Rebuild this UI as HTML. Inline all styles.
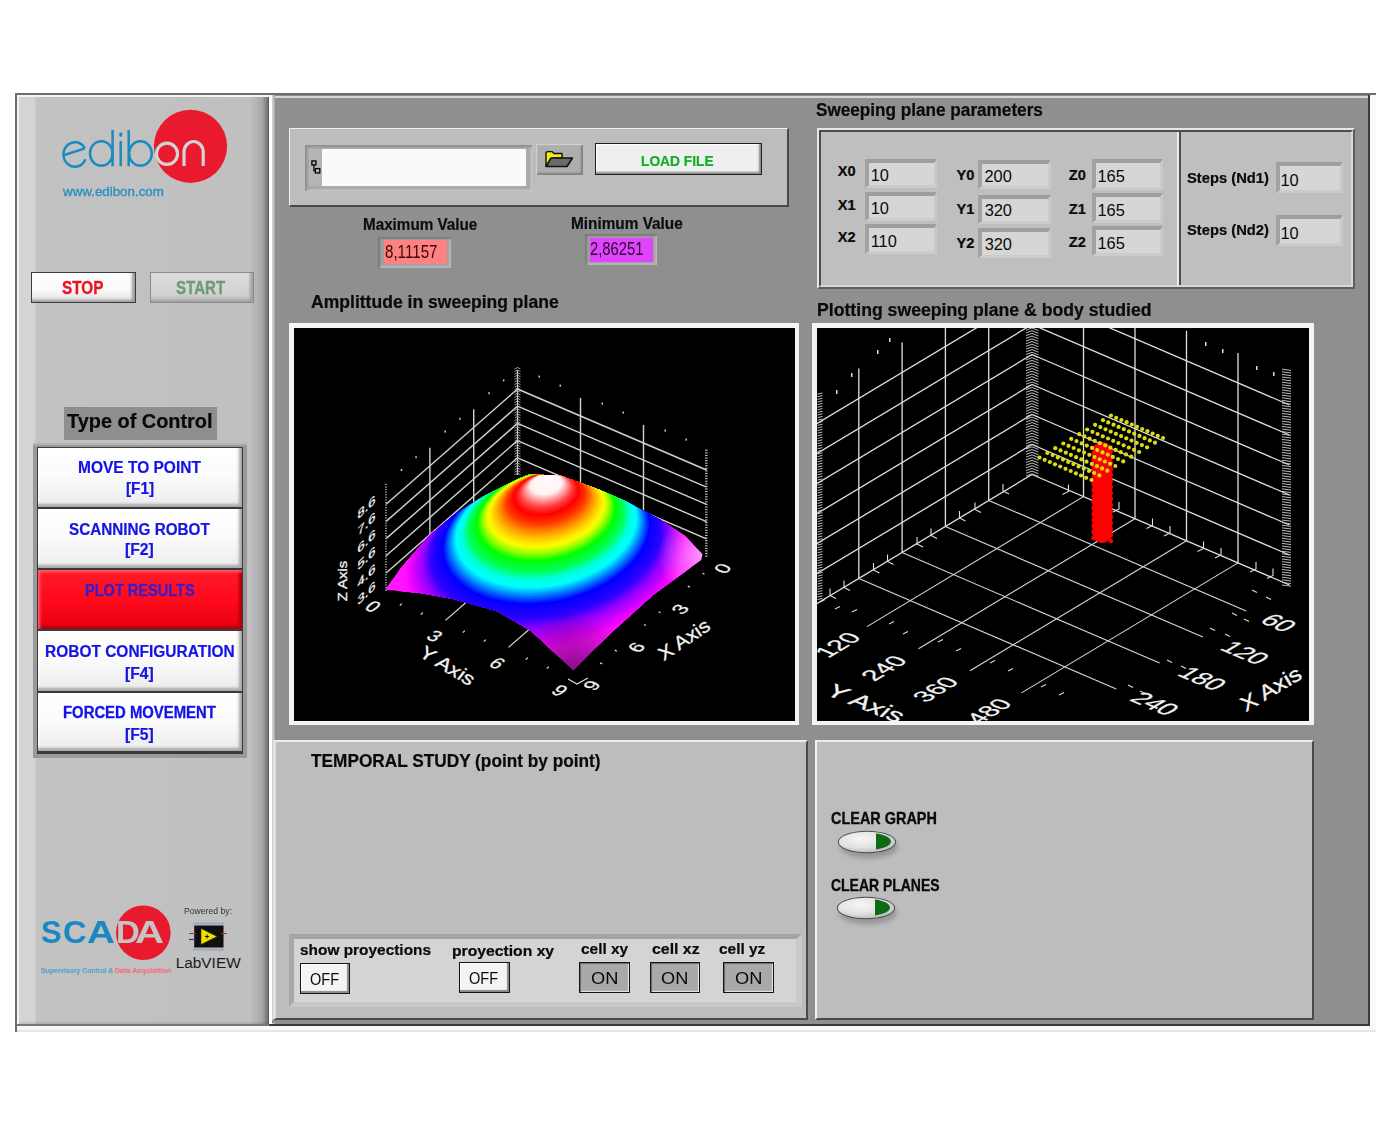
<!DOCTYPE html><html><head><meta charset="utf-8"><style>
html,body{margin:0;padding:0;}
body{width:1393px;height:1125px;position:relative;overflow:hidden;background:#fff;font-family:"Liberation Sans",sans-serif;}
body>div,body>span,body>svg{position:absolute;}
body>span{line-height:normal;white-space:nowrap;}
</style></head><body>
<div style="left:15.0px;top:93.0px;width:1361.0px;height:2.5px;background:#6e6e6e"></div>
<div style="left:15.0px;top:93.0px;width:2.0px;height:939.0px;background:#6e6e6e"></div>
<div style="left:1370.0px;top:95.0px;width:6.0px;height:937.0px;background:#fafafa"></div>
<div style="left:17.0px;top:1026.0px;width:1359.0px;height:6.0px;background:#f8f8f8"></div>
<div style="left:17.0px;top:1030.0px;width:1359.0px;height:2.0px;background:#e6e6e6"></div>
<div style="left:1368.0px;top:95.0px;width:2.0px;height:931.0px;background:#3a3a3a"></div>
<div style="left:17.0px;top:1024.0px;width:1353.0px;height:2.0px;background:#3a3a3a"></div>
<div style="left:17.0px;top:95.0px;width:252.0px;height:929.0px;background:linear-gradient(90deg,#f4f4f4 0px,#f4f4f4 2px,#d4d4d4 2px,#d4d4d4 17px,#c2c2c2 20px,#c0c0c0 233px,#a8a8a8 245px,#7a7a7a 250px,#555 252px)"></div>
<div style="left:17.0px;top:95.0px;width:252.0px;height:2.0px;background:#f4f4f4"></div>
<div style="left:19.0px;top:1021.0px;width:250.0px;height:3.0px;background:linear-gradient(180deg,rgba(0,0,0,0) 0,rgba(0,0,0,.12) 3px)"></div>
<div style="left:17.0px;top:1024.0px;width:252.0px;height:2.0px;background:#787878"></div>
<div style="left:269.0px;top:95.0px;width:3.0px;height:929.0px;background:#fdfdfd"></div>
<div style="left:272.0px;top:95.0px;width:1096.0px;height:929.0px;background:#8f8f8f"></div>
<div style="left:272.0px;top:95.5px;width:1096.0px;height:2.5px;background:#d8d8d8"></div>
<div style="left:272.0px;top:95.0px;width:3.0px;height:929.0px;background:linear-gradient(90deg,#d8d8d8,#a8a8a8)"></div>
<div style="left:272.0px;top:1019.5px;width:1096.0px;height:3.2px;background:#8f8f8f"></div>
<svg style="left:55px;top:105px" width="180" height="95" viewBox="55 105 180 95">
<circle cx="190.5" cy="146.3" r="36.6" fill="#e91a2e"/>
<g fill="none" stroke="#1a8bbf" stroke-width="2.5">
<path d="M84.8 148.4 A11.4 12.3 0 1 0 85.4 159.2"/>
<path d="M62.9 155.5 L84.8 148.4"/>
<ellipse cx="101.3" cy="153.4" rx="11.3" ry="12.2"/>
<path d="M112.6 130 V166.2"/>
<path d="M120.7 141 V166.2"/>
<path d="M128.7 130 V166.2"/>
<ellipse cx="140.4" cy="153.4" rx="11.4" ry="12.2"/>
</g>
<rect x="119.3" y="132.4" width="2.8" height="4.4" rx="1.2" fill="#1a8bbf"/>
<circle cx="167" cy="153.8" r="10.6" fill="none" stroke="#d4d4d4" stroke-width="3.2"/>
<path d="M184 166 V152 A9.6 10.5 0 0 1 203.2 152 V166" fill="none" stroke="#d4d4d4" stroke-width="3.2"/>
</svg>
<div style="left:31.0px;top:272.0px;width:105.0px;height:31.0px;background:linear-gradient(180deg,#fff 0,#fafafa 60%,#dcdcdc 100%);border:1.5px solid #3c3c3c;box-sizing:border-box;box-shadow:inset -4px -3px 3px -1px #9a9a9a"></div>
<div style="left:150.0px;top:272.0px;width:104.0px;height:31.0px;background:linear-gradient(180deg,#dcdcdc 0,#d2d2d2 70%,#bdbdbd 100%);border:1.5px solid #8a8a8a;box-sizing:border-box;box-shadow:inset -4px -3px 3px -1px #a0a0a0"></div>
<div style="left:64.0px;top:407.0px;width:153.0px;height:33.0px;background:#8e8e8e"></div>
<div style="left:33.0px;top:442.5px;width:214.0px;height:313.5px;background:#9a9a9a;border-top:2px solid #b4b4b4"></div>
<div style="left:37.0px;top:446.5px;width:206.0px;height:307.5px;background:#3a3a3a"></div>
<div style="left:38.0px;top:447.5px;width:204.0px;height:59.5px;background:linear-gradient(180deg,#ffffff 0,#fbfbfb 45%,#ececec 100%);box-shadow:inset -4px -4px 3px -1px #a8a8a8,inset 2px 2px 2px -1px #fff"></div>
<div style="left:38.0px;top:509.0px;width:204.0px;height:59.0px;background:linear-gradient(180deg,#ffffff 0,#fbfbfb 45%,#ececec 100%);box-shadow:inset -4px -4px 3px -1px #a8a8a8,inset 2px 2px 2px -1px #fff"></div>
<div style="left:38.0px;top:570.0px;width:204.0px;height:59.2px;background:linear-gradient(180deg,#ff1a2a 0,#ff0a1c 50%,#e8000f 100%);box-shadow:inset 3px 3px 3px -1px #ff6070,inset -4px -4px 3px -1px #b00010"></div>
<div style="left:38.0px;top:631.4px;width:204.0px;height:59.3px;background:linear-gradient(180deg,#ffffff 0,#fbfbfb 45%,#ececec 100%);box-shadow:inset -4px -4px 3px -1px #a8a8a8,inset 2px 2px 2px -1px #fff"></div>
<div style="left:38.0px;top:692.7px;width:204.0px;height:58.3px;background:linear-gradient(180deg,#ffffff 0,#fbfbfb 45%,#ececec 100%);box-shadow:inset -4px -4px 3px -1px #a8a8a8,inset 2px 2px 2px -1px #fff"></div>
<svg style="left:35px;top:895px" width="215" height="85" viewBox="35 895 215 85">
<circle cx="143.3" cy="932.7" r="27.3" fill="#e91a2e"/>
</svg>
<svg style="left:185px;top:920px" width="45" height="35" viewBox="185 920 45 35">
<rect x="193" y="922.5" width="31" height="2" fill="#9ab"/>
<rect x="193" y="948.5" width="31" height="2" fill="#9ab"/>
<rect x="194.2" y="925.5" width="29.3" height="22" fill="#101010"/>
<path d="M189 933.5 H196 M221 933.5 H227" stroke="#d02020" stroke-width="1.2"/>
<path d="M189 939.5 H196" stroke="#2030b0" stroke-width="1.2"/>
<path d="M201 928.5 L217 936.5 L201 944.5 Z" fill="#f0e000" stroke="#303000" stroke-width=".5"/>
<path d="M205 936.5 H209 M207 934.5 V938.5" stroke="#111" stroke-width="1"/>
</svg>
<div style="left:289.0px;top:127.5px;width:499.5px;height:79.8px;background:#bdbdbd;border-top:1.5px solid #f0f0f0;border-left:1.5px solid #f0f0f0;border-right:2px solid #4a4a4a;border-bottom:2px solid #4a4a4a;box-sizing:border-box"></div>
<div style="left:305.0px;top:144.5px;width:227.0px;height:46.1px;background:#aaaaaa;box-shadow:inset 3px 3px 2px -1px #909090, inset -2px -2px 2px -1px #cfcfcf"></div>
<div style="left:308.5px;top:149.0px;width:13.5px;height:37.3px;background:#b5b5b5"></div>
<div style="left:322.0px;top:149.0px;width:204.4px;height:37.3px;background:#fafafa"></div>
<svg style="left:309px;top:158px" width="14" height="18" viewBox="309 158 14 18">
<rect x="311.9" y="160.9" width="4" height="4" fill="none" stroke="#000" stroke-width="1.3"/>
<rect x="315.4" y="168.6" width="4.4" height="4.4" fill="none" stroke="#000" stroke-width="1.3"/>
<path d="M313.9 165 V170.8 H315.4" fill="none" stroke="#000" stroke-width="1.2"/>
</svg>
<div style="left:536.0px;top:143.7px;width:47.2px;height:31.3px;background:#aeaeae;box-shadow:inset 2px 2px 1px -1px #d4d4d4, inset -3px -3px 2px -1px #808080"></div>
<svg style="left:543px;top:149px" width="32" height="20" viewBox="543 149 32 20">
<path d="M546 166 V153 Q546 151.6 548 151.6 H552 L554 153.5 H562 V158 H553 Z" fill="#f2ee10" stroke="#111" stroke-width="1.4" stroke-linejoin="round"/>
<path d="M546 166.5 L551 158 H572.5 L567 166.5 Z" fill="#6a6a6a" stroke="#111" stroke-width="1.6" stroke-linejoin="round"/>
</svg>
<div style="left:595.0px;top:143.3px;width:167.0px;height:32.0px;background:#efefef;border:1.7px solid #1e1e1e;box-sizing:border-box;box-shadow:inset -3px -3px 2px -1px #8a8a8a, inset 2px 2px 1px -1px #fff"></div>
<div style="left:378.3px;top:236.8px;width:73.0px;height:31.5px;background:#a0a0a0;box-shadow:inset 3px 3px 2px -1px #7a7a7a, inset -3px -3px 2px -1px #b8b8b8"></div>
<div style="left:383.6px;top:240.3px;width:63.0px;height:23.6px;background:#ff8282"></div>
<div style="left:585.2px;top:234.4px;width:72.1px;height:30.9px;background:#a0a0a0;box-shadow:inset 3px 3px 2px -1px #7a7a7a, inset -3px -3px 2px -1px #b8b8b8"></div>
<div style="left:589.6px;top:238.0px;width:63.0px;height:23.5px;background:#e044fc"></div>
<div style="left:817.0px;top:128.0px;width:537.7px;height:161.0px;background:#bdbdbd;border-top:2px solid #e6e6e6;border-left:2px solid #e6e6e6;border-right:2px solid #5e5e5e;border-bottom:2px solid #5e5e5e;box-sizing:border-box"></div>
<div style="left:819.0px;top:130.0px;width:533.7px;height:157.0px;background:#bfbfbf;border-top:2.5px solid #4e4e4e;border-left:2px solid #4e4e4e;border-right:2.5px solid #d8d8d8;border-bottom:2.5px solid #d8d8d8;box-sizing:border-box"></div>
<div style="left:1177.0px;top:132.0px;width:1.5px;height:153.0px;background:#ececec"></div>
<div style="left:1178.5px;top:132.0px;width:2.3px;height:153.0px;background:#4e4e4e"></div>
<div style="left:865.0px;top:158.7px;width:71.8px;height:29.2px;background:#d6d6d6;border-top:4px solid #9e9e9e;border-left:4px solid #a2a2a2;border-right:3px solid #cacaca;border-bottom:3px solid #cccccc;box-sizing:border-box"></div>
<div style="left:865.0px;top:191.9px;width:71.8px;height:29.0px;background:#d6d6d6;border-top:4px solid #9e9e9e;border-left:4px solid #a2a2a2;border-right:3px solid #cacaca;border-bottom:3px solid #cccccc;box-sizing:border-box"></div>
<div style="left:865.0px;top:223.9px;width:71.8px;height:30.5px;background:#d6d6d6;border-top:4px solid #9e9e9e;border-left:4px solid #a2a2a2;border-right:3px solid #cacaca;border-bottom:3px solid #cccccc;box-sizing:border-box"></div>
<div style="left:978.3px;top:160.3px;width:72.3px;height:29.2px;background:#d6d6d6;border-top:4px solid #9e9e9e;border-left:4px solid #a2a2a2;border-right:3px solid #cacaca;border-bottom:3px solid #cccccc;box-sizing:border-box"></div>
<div style="left:978.3px;top:194.5px;width:72.3px;height:29.1px;background:#d6d6d6;border-top:4px solid #9e9e9e;border-left:4px solid #a2a2a2;border-right:3px solid #cacaca;border-bottom:3px solid #cccccc;box-sizing:border-box"></div>
<div style="left:978.3px;top:227.7px;width:72.3px;height:30.1px;background:#d6d6d6;border-top:4px solid #9e9e9e;border-left:4px solid #a2a2a2;border-right:3px solid #cacaca;border-bottom:3px solid #cccccc;box-sizing:border-box"></div>
<div style="left:1091.8px;top:158.6px;width:71.2px;height:31.1px;background:#d6d6d6;border-top:4px solid #9e9e9e;border-left:4px solid #a2a2a2;border-right:3px solid #cacaca;border-bottom:3px solid #cccccc;box-sizing:border-box"></div>
<div style="left:1091.8px;top:193.1px;width:71.2px;height:29.9px;background:#d6d6d6;border-top:4px solid #9e9e9e;border-left:4px solid #a2a2a2;border-right:3px solid #cacaca;border-bottom:3px solid #cccccc;box-sizing:border-box"></div>
<div style="left:1091.8px;top:226.4px;width:71.2px;height:29.9px;background:#d6d6d6;border-top:4px solid #9e9e9e;border-left:4px solid #a2a2a2;border-right:3px solid #cacaca;border-bottom:3px solid #cccccc;box-sizing:border-box"></div>
<div style="left:1275.5px;top:162.1px;width:67.8px;height:31.0px;background:#d6d6d6;border-top:4px solid #9e9e9e;border-left:4px solid #a2a2a2;border-right:3px solid #cacaca;border-bottom:3px solid #cccccc;box-sizing:border-box"></div>
<div style="left:1275.5px;top:214.9px;width:67.8px;height:31.1px;background:#d6d6d6;border-top:4px solid #9e9e9e;border-left:4px solid #a2a2a2;border-right:3px solid #cacaca;border-bottom:3px solid #cccccc;box-sizing:border-box"></div>
<div style="left:289.0px;top:323.0px;width:510.3px;height:402.3px;background:#f4f4f4"></div>
<div style="left:294.0px;top:328.0px;width:501.0px;height:393.0px;background:#000"></div>
<div style="left:812.0px;top:323.0px;width:501.8px;height:402.3px;background:#f4f4f4"></div>
<div style="left:817.0px;top:328.0px;width:492.0px;height:393.0px;background:#000"></div>
<svg style="left:294px;top:328px" width="501" height="393" viewBox="294 328 501 393" font-family="Liberation Sans, sans-serif">
<line x1="517.5" y1="457.8" x2="386.1" y2="573.0" stroke="#d4d4d4" stroke-width="1.4"/>
<line x1="517.5" y1="457.8" x2="706.5" y2="538.8" stroke="#d4d4d4" stroke-width="1.4"/>
<line x1="517.5" y1="440.6" x2="386.1" y2="555.8" stroke="#d4d4d4" stroke-width="1.4"/>
<line x1="517.5" y1="440.6" x2="706.5" y2="521.6" stroke="#d4d4d4" stroke-width="1.4"/>
<line x1="517.5" y1="423.4" x2="386.1" y2="538.6" stroke="#d4d4d4" stroke-width="1.4"/>
<line x1="517.5" y1="423.4" x2="706.5" y2="504.4" stroke="#d4d4d4" stroke-width="1.4"/>
<line x1="517.5" y1="406.2" x2="386.1" y2="521.4" stroke="#d4d4d4" stroke-width="1.4"/>
<line x1="517.5" y1="406.2" x2="706.5" y2="487.2" stroke="#d4d4d4" stroke-width="1.4"/>
<line x1="517.5" y1="389.0" x2="386.1" y2="504.2" stroke="#d4d4d4" stroke-width="1.4"/>
<line x1="517.5" y1="389.0" x2="706.5" y2="470.0" stroke="#d4d4d4" stroke-width="1.4"/>
<line x1="473.7" y1="513.4" x2="473.7" y2="409.3" stroke="#d4d4d4" stroke-width="1.4"/>
<line x1="429.9" y1="551.8" x2="429.9" y2="447.7" stroke="#d4d4d4" stroke-width="1.4"/>
<line x1="580.5" y1="502.0" x2="580.5" y2="397.9" stroke="#d4d4d4" stroke-width="1.4"/>
<line x1="643.5" y1="529.0" x2="643.5" y2="424.9" stroke="#d4d4d4" stroke-width="1.4"/>
<line x1="517.5" y1="475.0" x2="517.5" y2="370.1" stroke="#c8c8c8" stroke-width="1.2"/>
<rect x="385.1" y="589.7" width="1.8" height="1.1" fill="#aaa"/>
<rect x="705.0" y="555.5" width="2.6" height="1.1" fill="#bbb"/>
<path d="M514.5 474.8 L517.5 473.3 L520.5 474.8" fill="none" stroke="#bbb" stroke-width=".8"/>
<rect x="385.1" y="587.1" width="1.8" height="1.1" fill="#aaa"/>
<rect x="705.0" y="552.9" width="2.6" height="1.1" fill="#bbb"/>
<path d="M514.5 472.2 L517.5 470.7 L520.5 472.2" fill="none" stroke="#bbb" stroke-width=".8"/>
<rect x="385.1" y="584.5" width="1.8" height="1.1" fill="#aaa"/>
<rect x="705.0" y="550.3" width="2.6" height="1.1" fill="#bbb"/>
<path d="M514.5 469.6 L517.5 468.1 L520.5 469.6" fill="none" stroke="#bbb" stroke-width=".8"/>
<rect x="385.1" y="582.0" width="1.8" height="1.1" fill="#aaa"/>
<rect x="705.0" y="547.8" width="2.6" height="1.1" fill="#bbb"/>
<path d="M514.5 467.0 L517.5 465.5 L520.5 467.0" fill="none" stroke="#bbb" stroke-width=".8"/>
<rect x="385.1" y="579.4" width="1.8" height="1.1" fill="#aaa"/>
<rect x="705.0" y="545.2" width="2.6" height="1.1" fill="#bbb"/>
<path d="M514.5 464.5 L517.5 463.0 L520.5 464.5" fill="none" stroke="#bbb" stroke-width=".8"/>
<rect x="385.1" y="576.8" width="1.8" height="1.1" fill="#aaa"/>
<rect x="705.0" y="542.6" width="2.6" height="1.1" fill="#bbb"/>
<path d="M514.5 461.9 L517.5 460.4 L520.5 461.9" fill="none" stroke="#bbb" stroke-width=".8"/>
<rect x="385.1" y="574.2" width="1.8" height="1.1" fill="#aaa"/>
<rect x="705.0" y="540.0" width="2.6" height="1.1" fill="#bbb"/>
<path d="M514.5 459.3 L517.5 457.8 L520.5 459.3" fill="none" stroke="#bbb" stroke-width=".8"/>
<rect x="385.1" y="571.6" width="1.8" height="1.1" fill="#aaa"/>
<rect x="705.0" y="537.4" width="2.6" height="1.1" fill="#bbb"/>
<path d="M514.5 456.7 L517.5 455.2 L520.5 456.7" fill="none" stroke="#bbb" stroke-width=".8"/>
<rect x="385.1" y="569.1" width="1.8" height="1.1" fill="#aaa"/>
<rect x="705.0" y="534.9" width="2.6" height="1.1" fill="#bbb"/>
<path d="M514.5 454.1 L517.5 452.6 L520.5 454.1" fill="none" stroke="#bbb" stroke-width=".8"/>
<rect x="385.1" y="566.5" width="1.8" height="1.1" fill="#aaa"/>
<rect x="705.0" y="532.3" width="2.6" height="1.1" fill="#bbb"/>
<path d="M514.5 451.6 L517.5 450.1 L520.5 451.6" fill="none" stroke="#bbb" stroke-width=".8"/>
<rect x="385.1" y="563.9" width="1.8" height="1.1" fill="#aaa"/>
<rect x="705.0" y="529.7" width="2.6" height="1.1" fill="#bbb"/>
<path d="M514.5 449.0 L517.5 447.5 L520.5 449.0" fill="none" stroke="#bbb" stroke-width=".8"/>
<rect x="385.1" y="561.3" width="1.8" height="1.1" fill="#aaa"/>
<rect x="705.0" y="527.1" width="2.6" height="1.1" fill="#bbb"/>
<path d="M514.5 446.4 L517.5 444.9 L520.5 446.4" fill="none" stroke="#bbb" stroke-width=".8"/>
<rect x="385.1" y="558.7" width="1.8" height="1.1" fill="#aaa"/>
<rect x="705.0" y="524.5" width="2.6" height="1.1" fill="#bbb"/>
<path d="M514.5 443.8 L517.5 442.3 L520.5 443.8" fill="none" stroke="#bbb" stroke-width=".8"/>
<rect x="385.1" y="556.2" width="1.8" height="1.1" fill="#aaa"/>
<rect x="705.0" y="522.0" width="2.6" height="1.1" fill="#bbb"/>
<path d="M514.5 441.2 L517.5 439.7 L520.5 441.2" fill="none" stroke="#bbb" stroke-width=".8"/>
<rect x="385.1" y="553.6" width="1.8" height="1.1" fill="#aaa"/>
<rect x="705.0" y="519.4" width="2.6" height="1.1" fill="#bbb"/>
<path d="M514.5 438.7 L517.5 437.2 L520.5 438.7" fill="none" stroke="#bbb" stroke-width=".8"/>
<rect x="385.1" y="551.0" width="1.8" height="1.1" fill="#aaa"/>
<rect x="705.0" y="516.8" width="2.6" height="1.1" fill="#bbb"/>
<path d="M514.5 436.1 L517.5 434.6 L520.5 436.1" fill="none" stroke="#bbb" stroke-width=".8"/>
<rect x="385.1" y="548.4" width="1.8" height="1.1" fill="#aaa"/>
<rect x="705.0" y="514.2" width="2.6" height="1.1" fill="#bbb"/>
<path d="M514.5 433.5 L517.5 432.0 L520.5 433.5" fill="none" stroke="#bbb" stroke-width=".8"/>
<rect x="385.1" y="545.8" width="1.8" height="1.1" fill="#aaa"/>
<rect x="705.0" y="511.6" width="2.6" height="1.1" fill="#bbb"/>
<path d="M514.5 430.9 L517.5 429.4 L520.5 430.9" fill="none" stroke="#bbb" stroke-width=".8"/>
<rect x="385.1" y="543.3" width="1.8" height="1.1" fill="#aaa"/>
<rect x="705.0" y="509.1" width="2.6" height="1.1" fill="#bbb"/>
<path d="M514.5 428.3 L517.5 426.8 L520.5 428.3" fill="none" stroke="#bbb" stroke-width=".8"/>
<rect x="385.1" y="540.7" width="1.8" height="1.1" fill="#aaa"/>
<rect x="705.0" y="506.5" width="2.6" height="1.1" fill="#bbb"/>
<path d="M514.5 425.8 L517.5 424.3 L520.5 425.8" fill="none" stroke="#bbb" stroke-width=".8"/>
<rect x="385.1" y="538.1" width="1.8" height="1.1" fill="#aaa"/>
<rect x="705.0" y="503.9" width="2.6" height="1.1" fill="#bbb"/>
<path d="M514.5 423.2 L517.5 421.7 L520.5 423.2" fill="none" stroke="#bbb" stroke-width=".8"/>
<rect x="385.1" y="535.5" width="1.8" height="1.1" fill="#aaa"/>
<rect x="705.0" y="501.3" width="2.6" height="1.1" fill="#bbb"/>
<path d="M514.5 420.6 L517.5 419.1 L520.5 420.6" fill="none" stroke="#bbb" stroke-width=".8"/>
<rect x="385.1" y="532.9" width="1.8" height="1.1" fill="#aaa"/>
<rect x="705.0" y="498.7" width="2.6" height="1.1" fill="#bbb"/>
<path d="M514.5 418.0 L517.5 416.5 L520.5 418.0" fill="none" stroke="#bbb" stroke-width=".8"/>
<rect x="385.1" y="530.4" width="1.8" height="1.1" fill="#aaa"/>
<rect x="705.0" y="496.2" width="2.6" height="1.1" fill="#bbb"/>
<path d="M514.5 415.4 L517.5 413.9 L520.5 415.4" fill="none" stroke="#bbb" stroke-width=".8"/>
<rect x="385.1" y="527.8" width="1.8" height="1.1" fill="#aaa"/>
<rect x="705.0" y="493.6" width="2.6" height="1.1" fill="#bbb"/>
<path d="M514.5 412.9 L517.5 411.4 L520.5 412.9" fill="none" stroke="#bbb" stroke-width=".8"/>
<rect x="385.1" y="525.2" width="1.8" height="1.1" fill="#aaa"/>
<rect x="705.0" y="491.0" width="2.6" height="1.1" fill="#bbb"/>
<path d="M514.5 410.3 L517.5 408.8 L520.5 410.3" fill="none" stroke="#bbb" stroke-width=".8"/>
<rect x="385.1" y="522.6" width="1.8" height="1.1" fill="#aaa"/>
<rect x="705.0" y="488.4" width="2.6" height="1.1" fill="#bbb"/>
<path d="M514.5 407.7 L517.5 406.2 L520.5 407.7" fill="none" stroke="#bbb" stroke-width=".8"/>
<rect x="385.1" y="520.0" width="1.8" height="1.1" fill="#aaa"/>
<rect x="705.0" y="485.8" width="2.6" height="1.1" fill="#bbb"/>
<path d="M514.5 405.1 L517.5 403.6 L520.5 405.1" fill="none" stroke="#bbb" stroke-width=".8"/>
<rect x="385.1" y="517.5" width="1.8" height="1.1" fill="#aaa"/>
<rect x="705.0" y="483.3" width="2.6" height="1.1" fill="#bbb"/>
<path d="M514.5 402.5 L517.5 401.0 L520.5 402.5" fill="none" stroke="#bbb" stroke-width=".8"/>
<rect x="385.1" y="514.9" width="1.8" height="1.1" fill="#aaa"/>
<rect x="705.0" y="480.7" width="2.6" height="1.1" fill="#bbb"/>
<path d="M514.5 400.0 L517.5 398.5 L520.5 400.0" fill="none" stroke="#bbb" stroke-width=".8"/>
<rect x="385.1" y="512.3" width="1.8" height="1.1" fill="#aaa"/>
<rect x="705.0" y="478.1" width="2.6" height="1.1" fill="#bbb"/>
<path d="M514.5 397.4 L517.5 395.9 L520.5 397.4" fill="none" stroke="#bbb" stroke-width=".8"/>
<rect x="385.1" y="509.7" width="1.8" height="1.1" fill="#aaa"/>
<rect x="705.0" y="475.5" width="2.6" height="1.1" fill="#bbb"/>
<path d="M514.5 394.8 L517.5 393.3 L520.5 394.8" fill="none" stroke="#bbb" stroke-width=".8"/>
<rect x="385.1" y="507.1" width="1.8" height="1.1" fill="#aaa"/>
<rect x="705.0" y="472.9" width="2.6" height="1.1" fill="#bbb"/>
<path d="M514.5 392.2 L517.5 390.7 L520.5 392.2" fill="none" stroke="#bbb" stroke-width=".8"/>
<rect x="385.1" y="504.6" width="1.8" height="1.1" fill="#aaa"/>
<rect x="705.0" y="470.4" width="2.6" height="1.1" fill="#bbb"/>
<path d="M514.5 389.6 L517.5 388.1 L520.5 389.6" fill="none" stroke="#bbb" stroke-width=".8"/>
<rect x="385.1" y="502.0" width="1.8" height="1.1" fill="#aaa"/>
<rect x="705.0" y="467.8" width="2.6" height="1.1" fill="#bbb"/>
<path d="M514.5 387.1 L517.5 385.6 L520.5 387.1" fill="none" stroke="#bbb" stroke-width=".8"/>
<rect x="385.1" y="499.4" width="1.8" height="1.1" fill="#aaa"/>
<rect x="705.0" y="465.2" width="2.6" height="1.1" fill="#bbb"/>
<path d="M514.5 384.5 L517.5 383.0 L520.5 384.5" fill="none" stroke="#bbb" stroke-width=".8"/>
<rect x="385.1" y="496.8" width="1.8" height="1.1" fill="#aaa"/>
<rect x="705.0" y="462.6" width="2.6" height="1.1" fill="#bbb"/>
<path d="M514.5 381.9 L517.5 380.4 L520.5 381.9" fill="none" stroke="#bbb" stroke-width=".8"/>
<rect x="385.1" y="494.2" width="1.8" height="1.1" fill="#aaa"/>
<rect x="705.0" y="460.0" width="2.6" height="1.1" fill="#bbb"/>
<path d="M514.5 379.3 L517.5 377.8 L520.5 379.3" fill="none" stroke="#bbb" stroke-width=".8"/>
<rect x="385.1" y="491.7" width="1.8" height="1.1" fill="#aaa"/>
<rect x="705.0" y="457.5" width="2.6" height="1.1" fill="#bbb"/>
<path d="M514.5 376.7 L517.5 375.2 L520.5 376.7" fill="none" stroke="#bbb" stroke-width=".8"/>
<rect x="385.1" y="489.1" width="1.8" height="1.1" fill="#aaa"/>
<rect x="705.0" y="454.9" width="2.6" height="1.1" fill="#bbb"/>
<path d="M514.5 374.2 L517.5 372.7 L520.5 374.2" fill="none" stroke="#bbb" stroke-width=".8"/>
<rect x="385.1" y="486.5" width="1.8" height="1.1" fill="#aaa"/>
<rect x="705.0" y="452.3" width="2.6" height="1.1" fill="#bbb"/>
<path d="M514.5 371.6 L517.5 370.1 L520.5 371.6" fill="none" stroke="#bbb" stroke-width=".8"/>
<rect x="385.1" y="483.9" width="1.8" height="1.1" fill="#aaa"/>
<rect x="705.0" y="449.7" width="2.6" height="1.1" fill="#bbb"/>
<path d="M514.5 369.0 L517.5 367.5 L520.5 369.0" fill="none" stroke="#bbb" stroke-width=".8"/>
<rect x="502.9" y="379.4" width="1.5" height="2" fill="#ccc"/>
<rect x="488.3" y="392.2" width="1.5" height="2" fill="#ccc"/>
<rect x="459.1" y="417.8" width="1.5" height="2" fill="#ccc"/>
<rect x="444.5" y="430.6" width="1.5" height="2" fill="#ccc"/>
<rect x="415.3" y="456.2" width="1.5" height="2" fill="#ccc"/>
<rect x="400.7" y="469.0" width="1.5" height="2" fill="#ccc"/>
<rect x="538.5" y="375.6" width="1.5" height="2" fill="#ccc"/>
<rect x="559.5" y="384.6" width="1.5" height="2" fill="#ccc"/>
<rect x="601.5" y="402.6" width="1.5" height="2" fill="#ccc"/>
<rect x="622.5" y="411.6" width="1.5" height="2" fill="#ccc"/>
<rect x="664.5" y="429.6" width="1.5" height="2" fill="#ccc"/>
<rect x="685.5" y="438.6" width="1.5" height="2" fill="#ccc"/>
<line x1="445.5" y1="620.4" x2="475.4" y2="594.2" stroke="#ddd" stroke-width="1.2"/>
<line x1="508.5" y1="647.4" x2="538.4" y2="621.2" stroke="#ddd" stroke-width="1.2"/>
<defs><clipPath id="sc"><path d="M386 588L400 569L428.8 536L455 514L482.5 497L516.7 479.5L528.9 474.6L560.6 475.4L575.3 481L600 490L624.1 500.5L660.7 520L685 536L702.5 554L701.3 560L653.3 594.7L610.7 633.3L573.3 670.7L531.3 630.9L497.2 611.3L453.2 599.1L420 593L386 590Z"/></clipPath></defs>
<g clip-path="url(#sc)">
<path d="M386 588L400 569L428.8 536L455 514L482.5 497L516.7 479.5L528.9 474.6L560.6 475.4L575.3 481L600 490L624.1 500.5L660.7 520L685 536L702.5 554L701.3 560L653.3 594.7L610.7 633.3L573.3 670.7L531.3 630.9L497.2 611.3L453.2 599.1L420 593L386 590Z" fill="#ff18ff"/>
<ellipse cx="4.0" cy="4.15" rx="6.600" ry="5.400" fill="#ff18ff" transform="matrix(-14.6 12.8 21.0 9.0 517.5 475.00)"/>
<ellipse cx="4.0" cy="4.15" rx="6.527" ry="5.340" fill="#ff16ff" transform="matrix(-14.6 12.8 21.0 9.0 517.5 474.01)"/>
<ellipse cx="4.0" cy="4.15" rx="6.453" ry="5.280" fill="#ff14ff" transform="matrix(-14.6 12.8 21.0 9.0 517.5 473.02)"/>
<ellipse cx="4.0" cy="4.15" rx="6.380" ry="5.220" fill="#ff12ff" transform="matrix(-14.6 12.8 21.0 9.0 517.5 472.04)"/>
<ellipse cx="4.0" cy="4.15" rx="6.307" ry="5.160" fill="#ff10ff" transform="matrix(-14.6 12.8 21.0 9.0 517.5 471.05)"/>
<ellipse cx="4.0" cy="4.15" rx="6.233" ry="5.100" fill="#fb0eff" transform="matrix(-14.6 12.8 21.0 9.0 517.5 470.06)"/>
<ellipse cx="4.0" cy="4.15" rx="6.160" ry="5.040" fill="#f40aff" transform="matrix(-14.6 12.8 21.0 9.0 517.5 469.07)"/>
<ellipse cx="4.0" cy="4.15" rx="6.087" ry="4.980" fill="#ed07ff" transform="matrix(-14.6 12.8 21.0 9.0 517.5 468.08)"/>
<ellipse cx="4.0" cy="4.15" rx="6.013" ry="4.920" fill="#e603ff" transform="matrix(-14.6 12.8 21.0 9.0 517.5 467.10)"/>
<ellipse cx="4.0" cy="4.15" rx="5.940" ry="4.860" fill="#e000ff" transform="matrix(-14.6 12.8 21.0 9.0 517.5 466.11)"/>
<ellipse cx="4.0" cy="4.15" rx="5.867" ry="4.800" fill="#d300ff" transform="matrix(-14.6 12.8 21.0 9.0 517.5 465.12)"/>
<ellipse cx="4.0" cy="4.15" rx="5.793" ry="4.740" fill="#c600ff" transform="matrix(-14.6 12.8 21.0 9.0 517.5 464.13)"/>
<ellipse cx="4.0" cy="4.15" rx="5.720" ry="4.680" fill="#b900ff" transform="matrix(-14.6 12.8 21.0 9.0 517.5 463.14)"/>
<ellipse cx="4.0" cy="4.15" rx="5.647" ry="4.620" fill="#ad00ff" transform="matrix(-14.6 12.8 21.0 9.0 517.5 462.16)"/>
<ellipse cx="4.0" cy="4.15" rx="5.573" ry="4.560" fill="#a000ff" transform="matrix(-14.6 12.8 21.0 9.0 517.5 461.17)"/>
<ellipse cx="4.0" cy="4.15" rx="5.500" ry="4.500" fill="#9300ff" transform="matrix(-14.6 12.8 21.0 9.0 517.5 460.18)"/>
<ellipse cx="4.0" cy="4.15" rx="5.427" ry="4.440" fill="#8100ff" transform="matrix(-14.6 12.8 21.0 9.0 517.5 459.19)"/>
<ellipse cx="4.0" cy="4.15" rx="5.353" ry="4.380" fill="#6b00ff" transform="matrix(-14.6 12.8 21.0 9.0 517.5 458.20)"/>
<ellipse cx="4.0" cy="4.15" rx="5.280" ry="4.320" fill="#5600ff" transform="matrix(-14.6 12.8 21.0 9.0 517.5 457.22)"/>
<ellipse cx="4.0" cy="4.15" rx="5.207" ry="4.260" fill="#4100ff" transform="matrix(-14.6 12.8 21.0 9.0 517.5 456.23)"/>
<ellipse cx="4.0" cy="4.15" rx="5.133" ry="4.200" fill="#2e00ff" transform="matrix(-14.6 12.8 21.0 9.0 517.5 455.24)"/>
<ellipse cx="4.0" cy="4.15" rx="5.060" ry="4.140" fill="#2800ff" transform="matrix(-14.6 12.8 21.0 9.0 517.5 454.25)"/>
<ellipse cx="4.0" cy="4.15" rx="4.987" ry="4.080" fill="#2100ff" transform="matrix(-14.6 12.8 21.0 9.0 517.5 453.26)"/>
<ellipse cx="4.0" cy="4.15" rx="4.913" ry="4.020" fill="#1a00ff" transform="matrix(-14.6 12.8 21.0 9.0 517.5 452.27)"/>
<ellipse cx="4.0" cy="4.15" rx="4.840" ry="3.960" fill="#1300ff" transform="matrix(-14.6 12.8 21.0 9.0 517.5 451.29)"/>
<ellipse cx="4.0" cy="4.15" rx="4.767" ry="3.900" fill="#0d00ff" transform="matrix(-14.6 12.8 21.0 9.0 517.5 450.30)"/>
<ellipse cx="4.0" cy="4.15" rx="4.693" ry="3.840" fill="#0600ff" transform="matrix(-14.6 12.8 21.0 9.0 517.5 449.31)"/>
<ellipse cx="4.0" cy="4.15" rx="4.620" ry="3.780" fill="#0000ff" transform="matrix(-14.6 12.8 21.0 9.0 517.5 448.32)"/>
<ellipse cx="4.0" cy="4.15" rx="4.547" ry="3.720" fill="#001fff" transform="matrix(-14.6 12.8 21.0 9.0 517.5 447.33)"/>
<ellipse cx="4.0" cy="4.15" rx="4.473" ry="3.660" fill="#003fff" transform="matrix(-14.6 12.8 21.0 9.0 517.5 446.35)"/>
<ellipse cx="4.0" cy="4.15" rx="4.400" ry="3.600" fill="#005eff" transform="matrix(-14.6 12.8 21.0 9.0 517.5 445.36)"/>
<ellipse cx="4.0" cy="4.15" rx="4.327" ry="3.540" fill="#007eff" transform="matrix(-14.6 12.8 21.0 9.0 517.5 444.37)"/>
<ellipse cx="4.0" cy="4.15" rx="4.253" ry="3.480" fill="#009dff" transform="matrix(-14.6 12.8 21.0 9.0 517.5 443.38)"/>
<ellipse cx="4.0" cy="4.15" rx="4.180" ry="3.420" fill="#00bdff" transform="matrix(-14.6 12.8 21.0 9.0 517.5 442.39)"/>
<ellipse cx="4.0" cy="4.15" rx="4.107" ry="3.360" fill="#00dcff" transform="matrix(-14.6 12.8 21.0 9.0 517.5 441.41)"/>
<ellipse cx="4.0" cy="4.15" rx="4.033" ry="3.300" fill="#00fbff" transform="matrix(-14.6 12.8 21.0 9.0 517.5 440.42)"/>
<ellipse cx="4.0" cy="4.15" rx="3.960" ry="3.240" fill="#00fff7" transform="matrix(-14.6 12.8 21.0 9.0 517.5 439.43)"/>
<ellipse cx="4.0" cy="4.15" rx="3.887" ry="3.180" fill="#00ffee" transform="matrix(-14.6 12.8 21.0 9.0 517.5 438.44)"/>
<ellipse cx="4.0" cy="4.15" rx="3.813" ry="3.120" fill="#00ffe6" transform="matrix(-14.6 12.8 21.0 9.0 517.5 437.45)"/>
<ellipse cx="4.0" cy="4.15" rx="3.740" ry="3.060" fill="#00ffd5" transform="matrix(-14.6 12.8 21.0 9.0 517.5 436.47)"/>
<ellipse cx="4.0" cy="4.15" rx="3.667" ry="3.000" fill="#00ffb1" transform="matrix(-14.6 12.8 21.0 9.0 517.5 435.48)"/>
<ellipse cx="4.0" cy="4.15" rx="3.593" ry="2.940" fill="#00ff8e" transform="matrix(-14.6 12.8 21.0 9.0 517.5 434.49)"/>
<ellipse cx="4.0" cy="4.15" rx="3.520" ry="2.880" fill="#00ff6a" transform="matrix(-14.6 12.8 21.0 9.0 517.5 433.50)"/>
<ellipse cx="4.0" cy="4.15" rx="3.447" ry="2.820" fill="#00ff53" transform="matrix(-14.6 12.8 21.0 9.0 517.5 432.51)"/>
<ellipse cx="4.0" cy="4.15" rx="3.373" ry="2.760" fill="#00ff41" transform="matrix(-14.6 12.8 21.0 9.0 517.5 431.53)"/>
<ellipse cx="4.0" cy="4.15" rx="3.300" ry="2.700" fill="#00ff30" transform="matrix(-14.6 12.8 21.0 9.0 517.5 430.54)"/>
<ellipse cx="4.0" cy="4.15" rx="3.227" ry="2.640" fill="#00ff1e" transform="matrix(-14.6 12.8 21.0 9.0 517.5 429.55)"/>
<ellipse cx="4.0" cy="4.15" rx="3.153" ry="2.580" fill="#00ff0c" transform="matrix(-14.6 12.8 21.0 9.0 517.5 428.56)"/>
<ellipse cx="4.0" cy="4.15" rx="3.080" ry="2.520" fill="#0cff00" transform="matrix(-14.6 12.8 21.0 9.0 517.5 427.57)"/>
<ellipse cx="4.0" cy="4.15" rx="3.007" ry="2.460" fill="#36ff00" transform="matrix(-14.6 12.8 21.0 9.0 517.5 426.59)"/>
<ellipse cx="4.0" cy="4.15" rx="2.933" ry="2.400" fill="#5fff00" transform="matrix(-14.6 12.8 21.0 9.0 517.5 425.60)"/>
<ellipse cx="4.0" cy="4.15" rx="2.860" ry="2.340" fill="#89ff00" transform="matrix(-14.6 12.8 21.0 9.0 517.5 424.61)"/>
<ellipse cx="4.0" cy="4.15" rx="2.787" ry="2.280" fill="#adff00" transform="matrix(-14.6 12.8 21.0 9.0 517.5 423.62)"/>
<ellipse cx="4.0" cy="4.15" rx="2.713" ry="2.220" fill="#ceff00" transform="matrix(-14.6 12.8 21.0 9.0 517.5 422.63)"/>
<ellipse cx="4.0" cy="4.15" rx="2.640" ry="2.160" fill="#efff00" transform="matrix(-14.6 12.8 21.0 9.0 517.5 421.65)"/>
<ellipse cx="4.0" cy="4.15" rx="2.567" ry="2.100" fill="#fff700" transform="matrix(-14.6 12.8 21.0 9.0 517.5 420.66)"/>
<ellipse cx="4.0" cy="4.15" rx="2.493" ry="2.040" fill="#ffea00" transform="matrix(-14.6 12.8 21.0 9.0 517.5 419.67)"/>
<ellipse cx="4.0" cy="4.15" rx="2.420" ry="1.980" fill="#ffdd00" transform="matrix(-14.6 12.8 21.0 9.0 517.5 418.68)"/>
<ellipse cx="4.0" cy="4.15" rx="2.347" ry="1.920" fill="#ffcd00" transform="matrix(-14.6 12.8 21.0 9.0 517.5 417.69)"/>
<ellipse cx="4.0" cy="4.15" rx="2.273" ry="1.860" fill="#ffbc00" transform="matrix(-14.6 12.8 21.0 9.0 517.5 416.71)"/>
<ellipse cx="4.0" cy="4.15" rx="2.200" ry="1.800" fill="#ffaa00" transform="matrix(-14.6 12.8 21.0 9.0 517.5 415.72)"/>
<ellipse cx="4.0" cy="4.15" rx="2.127" ry="1.740" fill="#ff9900" transform="matrix(-14.6 12.8 21.0 9.0 517.5 414.73)"/>
<ellipse cx="4.0" cy="4.15" rx="2.053" ry="1.680" fill="#ff8500" transform="matrix(-14.6 12.8 21.0 9.0 517.5 413.74)"/>
<ellipse cx="4.0" cy="4.15" rx="1.980" ry="1.620" fill="#ff7000" transform="matrix(-14.6 12.8 21.0 9.0 517.5 412.75)"/>
<ellipse cx="4.0" cy="4.15" rx="1.907" ry="1.560" fill="#ff5b00" transform="matrix(-14.6 12.8 21.0 9.0 517.5 411.77)"/>
<ellipse cx="4.0" cy="4.15" rx="1.833" ry="1.500" fill="#ff4600" transform="matrix(-14.6 12.8 21.0 9.0 517.5 410.78)"/>
<ellipse cx="4.0" cy="4.15" rx="1.760" ry="1.440" fill="#ff3400" transform="matrix(-14.6 12.8 21.0 9.0 517.5 409.79)"/>
<ellipse cx="4.0" cy="4.15" rx="1.687" ry="1.380" fill="#ff2700" transform="matrix(-14.6 12.8 21.0 9.0 517.5 408.80)"/>
<ellipse cx="4.0" cy="4.15" rx="1.613" ry="1.320" fill="#ff1b00" transform="matrix(-14.6 12.8 21.0 9.0 517.5 407.81)"/>
<ellipse cx="4.0" cy="4.15" rx="1.540" ry="1.260" fill="#ff0e00" transform="matrix(-14.6 12.8 21.0 9.0 517.5 406.82)"/>
<ellipse cx="4.0" cy="4.15" rx="1.467" ry="1.200" fill="#ff0200" transform="matrix(-14.6 12.8 21.0 9.0 517.5 405.84)"/>
<ellipse cx="4.0" cy="4.15" rx="1.393" ry="1.140" fill="#ff0e0e" transform="matrix(-14.6 12.8 21.0 9.0 517.5 404.85)"/>
<ellipse cx="4.0" cy="4.15" rx="1.320" ry="1.080" fill="#ff1f1f" transform="matrix(-14.6 12.8 21.0 9.0 517.5 403.86)"/>
<ellipse cx="4.0" cy="4.15" rx="1.247" ry="1.020" fill="#ff3131" transform="matrix(-14.6 12.8 21.0 9.0 517.5 402.87)"/>
<ellipse cx="4.0" cy="4.15" rx="1.173" ry="0.960" fill="#ff4545" transform="matrix(-14.6 12.8 21.0 9.0 517.5 401.88)"/>
<ellipse cx="4.0" cy="4.15" rx="1.100" ry="0.900" fill="#ff6262" transform="matrix(-14.6 12.8 21.0 9.0 517.5 400.90)"/>
<ellipse cx="4.0" cy="4.15" rx="1.027" ry="0.840" fill="#ff7e7e" transform="matrix(-14.6 12.8 21.0 9.0 517.5 399.91)"/>
<ellipse cx="4.0" cy="4.15" rx="0.953" ry="0.780" fill="#ff9b9b" transform="matrix(-14.6 12.8 21.0 9.0 517.5 398.92)"/>
<ellipse cx="4.0" cy="4.15" rx="0.880" ry="0.720" fill="#ffb8b8" transform="matrix(-14.6 12.8 21.0 9.0 517.5 397.93)"/>
<ellipse cx="4.0" cy="4.15" rx="0.807" ry="0.660" fill="#ffd4d4" transform="matrix(-14.6 12.8 21.0 9.0 517.5 396.94)"/>
<ellipse cx="4.0" cy="4.15" rx="0.733" ry="0.600" fill="#fff1f1" transform="matrix(-14.6 12.8 21.0 9.0 517.5 395.96)"/>
<ellipse cx="4.0" cy="4.15" rx="0.660" ry="0.540" fill="#fff5f5" transform="matrix(-14.6 12.8 21.0 9.0 517.5 394.97)"/>
<ellipse cx="4.0" cy="4.15" rx="0.587" ry="0.480" fill="#fff6f6" transform="matrix(-14.6 12.8 21.0 9.0 517.5 393.98)"/>
<ellipse cx="4.0" cy="4.15" rx="0.513" ry="0.420" fill="#fff7f7" transform="matrix(-14.6 12.8 21.0 9.0 517.5 392.99)"/>
<ellipse cx="4.0" cy="4.15" rx="0.440" ry="0.360" fill="#fff8f8" transform="matrix(-14.6 12.8 21.0 9.0 517.5 392.00)"/>
<ellipse cx="4.0" cy="4.15" rx="0.367" ry="0.300" fill="#fff9f9" transform="matrix(-14.6 12.8 21.0 9.0 517.5 391.02)"/>
<ellipse cx="4.0" cy="4.15" rx="0.293" ry="0.240" fill="#fffafa" transform="matrix(-14.6 12.8 21.0 9.0 517.5 390.03)"/>
<ellipse cx="4.0" cy="4.15" rx="0.220" ry="0.180" fill="#fffbfb" transform="matrix(-14.6 12.8 21.0 9.0 517.5 389.04)"/>
<ellipse cx="4.0" cy="4.15" rx="0.147" ry="0.120" fill="#fffcfc" transform="matrix(-14.6 12.8 21.0 9.0 517.5 388.05)"/>
<ellipse cx="4.0" cy="4.15" rx="0.073" ry="0.060" fill="#fffdfd" transform="matrix(-14.6 12.8 21.0 9.0 517.5 387.06)"/>
<ellipse cx="4.0" cy="4.15" rx="0.020" ry="0.020" fill="#ffffff" transform="matrix(-14.6 12.8 21.0 9.0 517.5 386.08)"/>
<defs><radialGradient id="bc" cx="573" cy="672" r="60" gradientUnits="userSpaceOnUse"><stop offset="0" stop-color="#200020" stop-opacity=".55"/><stop offset="1" stop-color="#200020" stop-opacity="0"/></radialGradient><radialGradient id="rc" cx="703" cy="556" r="45" gradientUnits="userSpaceOnUse"><stop offset="0" stop-color="#fff" stop-opacity=".55"/><stop offset="1" stop-color="#fff" stop-opacity="0"/></radialGradient></defs>
<rect x="500" y="600" width="150" height="80" fill="url(#bc)"/>
<rect x="640" y="500" width="80" height="80" fill="url(#rc)"/>
</g>
<text x="0" y="0" font-size="19" text-anchor="middle" dominant-baseline="central" fill="#f2f2f2" stroke="#f2f2f2" stroke-width="0.3" transform="matrix(0.919 0.394 -0.747 0.664 373.0 606.5)">0</text>
<text x="0" y="0" font-size="19" text-anchor="middle" dominant-baseline="central" fill="#f2f2f2" stroke="#f2f2f2" stroke-width="0.3" transform="matrix(0.919 0.394 -0.747 0.664 434.8 636.0)">3</text>
<text x="0" y="0" font-size="19" text-anchor="middle" dominant-baseline="central" fill="#f2f2f2" stroke="#f2f2f2" stroke-width="0.3" transform="matrix(0.919 0.394 -0.747 0.664 497.3 663.2)">6</text>
<text x="0" y="0" font-size="19" text-anchor="middle" dominant-baseline="central" fill="#f2f2f2" stroke="#f2f2f2" stroke-width="0.3" transform="matrix(0.919 0.394 -0.747 0.664 559.7 690.5)">9</text>
<text x="0" y="0" font-size="19" text-anchor="middle" dominant-baseline="central" fill="#f2f2f2" stroke="#f2f2f2" stroke-width="0.3" transform="matrix(0.988 0.589 -0.600 0.800 447.7 665.3)">Y Axis</text>
<text x="0" y="0" font-size="19" text-anchor="middle" dominant-baseline="central" fill="#f2f2f2" stroke="#f2f2f2" stroke-width="0.3" transform="matrix(0.747 -0.664 0.919 0.394 722.6 568.5)">0</text>
<text x="0" y="0" font-size="19" text-anchor="middle" dominant-baseline="central" fill="#f2f2f2" stroke="#f2f2f2" stroke-width="0.3" transform="matrix(0.747 -0.664 0.919 0.394 680.3 609.3)">3</text>
<text x="0" y="0" font-size="19" text-anchor="middle" dominant-baseline="central" fill="#f2f2f2" stroke="#f2f2f2" stroke-width="0.3" transform="matrix(0.747 -0.664 0.919 0.394 636.5 647.5)">6</text>
<text x="0" y="0" font-size="19" text-anchor="middle" dominant-baseline="central" fill="#f2f2f2" stroke="#f2f2f2" stroke-width="0.3" transform="matrix(0.747 -0.664 0.919 0.394 592.0 685.5)">9</text>
<text x="0" y="0" font-size="19" text-anchor="middle" dominant-baseline="central" fill="#f2f2f2" stroke="#f2f2f2" stroke-width="0.3" transform="matrix(0.911 -0.616 0.560 0.828 684.0 639.5)">X Axis</text>
<text x="0" y="0" font-size="12" text-anchor="middle" dominant-baseline="central" fill="#f2f2f2" stroke="#f2f2f2" stroke-width="0.3" transform="matrix(1.077 -1.044 -0.000 1.000 366.5 592.7)">3.6</text>
<text x="0" y="0" font-size="12" text-anchor="middle" dominant-baseline="central" fill="#f2f2f2" stroke="#f2f2f2" stroke-width="0.3" transform="matrix(1.077 -1.044 -0.000 1.000 366.5 575.3)">4.6</text>
<text x="0" y="0" font-size="12" text-anchor="middle" dominant-baseline="central" fill="#f2f2f2" stroke="#f2f2f2" stroke-width="0.3" transform="matrix(1.077 -1.044 -0.000 1.000 366.5 557.8)">5.6</text>
<text x="0" y="0" font-size="12" text-anchor="middle" dominant-baseline="central" fill="#f2f2f2" stroke="#f2f2f2" stroke-width="0.3" transform="matrix(1.077 -1.044 -0.000 1.000 366.5 541.0)">6.6</text>
<text x="0" y="0" font-size="12" text-anchor="middle" dominant-baseline="central" fill="#f2f2f2" stroke="#f2f2f2" stroke-width="0.3" transform="matrix(1.077 -1.044 -0.000 1.000 366.5 523.6)">7.6</text>
<text x="0" y="0" font-size="12" text-anchor="middle" dominant-baseline="central" fill="#f2f2f2" stroke="#f2f2f2" stroke-width="0.3" transform="matrix(1.077 -1.044 -0.000 1.000 366.5 506.8)">8.6</text>
<text x="0" y="0" font-size="13" text-anchor="middle" dominant-baseline="central" fill="#f2f2f2" stroke="#f2f2f2" stroke-width="0.3" transform="matrix(0.000 -1.150 1.000 -0.000 342.4 581.0)">Z Axis</text>
<line x1="399.8" y1="605.6" x2="401.8" y2="603.6" stroke="#ddd" stroke-width="1.2"/>
<line x1="420.8" y1="614.6" x2="422.8" y2="612.6" stroke="#ddd" stroke-width="1.2"/>
<line x1="462.8" y1="632.6" x2="464.8" y2="630.6" stroke="#ddd" stroke-width="1.2"/>
<line x1="483.8" y1="641.6" x2="485.8" y2="639.6" stroke="#ddd" stroke-width="1.2"/>
<line x1="525.8" y1="659.6" x2="527.8" y2="657.6" stroke="#ddd" stroke-width="1.2"/>
<line x1="546.8" y1="668.6" x2="548.8" y2="666.6" stroke="#ddd" stroke-width="1.2"/>
<line x1="702.4" y1="573.3" x2="704.4" y2="574.3" stroke="#ddd" stroke-width="1.2"/>
<line x1="687.8" y1="586.1" x2="689.8" y2="587.1" stroke="#ddd" stroke-width="1.2"/>
<line x1="658.6" y1="611.7" x2="660.6" y2="612.7" stroke="#ddd" stroke-width="1.2"/>
<line x1="644.0" y1="624.5" x2="646.0" y2="625.5" stroke="#ddd" stroke-width="1.2"/>
<line x1="614.8" y1="650.1" x2="616.8" y2="651.1" stroke="#ddd" stroke-width="1.2"/>
<line x1="600.2" y1="662.9" x2="602.2" y2="663.9" stroke="#ddd" stroke-width="1.2"/>
<path d="M568 679 L577 684 L588 678" fill="none" stroke="#ddd" stroke-width="1.2"/>
</svg>
<svg style="left:817px;top:328px" width="492" height="393" viewBox="817 328 492 393" font-family="Liberation Sans, sans-serif">
<line x1="1032.0" y1="474.5" x2="815.5" y2="604.5" stroke="#e0e0e0" stroke-width="1.3"/>
<line x1="1032.0" y1="474.5" x2="1289.5" y2="585.0" stroke="#e0e0e0" stroke-width="1.3"/>
<line x1="1032.0" y1="444.5" x2="815.5" y2="574.5" stroke="#e0e0e0" stroke-width="1.3"/>
<line x1="1032.0" y1="444.5" x2="1289.5" y2="555.0" stroke="#e0e0e0" stroke-width="1.3"/>
<line x1="1032.0" y1="414.5" x2="815.5" y2="544.5" stroke="#e0e0e0" stroke-width="1.3"/>
<line x1="1032.0" y1="414.5" x2="1289.5" y2="525.0" stroke="#e0e0e0" stroke-width="1.3"/>
<line x1="1032.0" y1="384.5" x2="815.5" y2="514.5" stroke="#e0e0e0" stroke-width="1.3"/>
<line x1="1032.0" y1="384.5" x2="1289.5" y2="495.0" stroke="#e0e0e0" stroke-width="1.3"/>
<line x1="1032.0" y1="354.5" x2="815.5" y2="484.5" stroke="#e0e0e0" stroke-width="1.3"/>
<line x1="1032.0" y1="354.5" x2="1289.5" y2="465.0" stroke="#e0e0e0" stroke-width="1.3"/>
<line x1="1032.0" y1="324.5" x2="815.5" y2="454.5" stroke="#e0e0e0" stroke-width="1.3"/>
<line x1="1032.0" y1="324.5" x2="1289.5" y2="435.0" stroke="#e0e0e0" stroke-width="1.3"/>
<line x1="1032.0" y1="294.5" x2="815.5" y2="424.5" stroke="#e0e0e0" stroke-width="1.3"/>
<line x1="1032.0" y1="294.5" x2="1289.5" y2="405.0" stroke="#e0e0e0" stroke-width="1.3"/>
<line x1="988.7" y1="500.5" x2="988.7" y2="290.5" stroke="#e0e0e0" stroke-width="1.3"/>
<line x1="1083.5" y1="496.6" x2="1083.5" y2="286.6" stroke="#e0e0e0" stroke-width="1.3"/>
<line x1="945.4" y1="526.5" x2="945.4" y2="316.5" stroke="#e0e0e0" stroke-width="1.3"/>
<line x1="1135.0" y1="518.7" x2="1135.0" y2="308.7" stroke="#e0e0e0" stroke-width="1.3"/>
<line x1="902.1" y1="552.5" x2="902.1" y2="342.5" stroke="#e0e0e0" stroke-width="1.3"/>
<line x1="1186.5" y1="540.8" x2="1186.5" y2="330.8" stroke="#e0e0e0" stroke-width="1.3"/>
<line x1="858.8" y1="578.5" x2="858.8" y2="368.5" stroke="#e0e0e0" stroke-width="1.3"/>
<line x1="1238.0" y1="562.9" x2="1238.0" y2="352.9" stroke="#e0e0e0" stroke-width="1.3"/>
<line x1="988.7" y1="500.5" x2="1246.2" y2="611.0" stroke="#d8d8d8" stroke-width="1.1"/>
<line x1="1083.5" y1="496.6" x2="867.0" y2="626.6" stroke="#d8d8d8" stroke-width="1.1"/>
<line x1="945.4" y1="526.5" x2="1202.9" y2="637.0" stroke="#d8d8d8" stroke-width="1.1"/>
<line x1="1135.0" y1="518.7" x2="918.5" y2="648.7" stroke="#d8d8d8" stroke-width="1.1"/>
<line x1="902.1" y1="552.5" x2="1159.6" y2="663.0" stroke="#d8d8d8" stroke-width="1.1"/>
<line x1="1186.5" y1="540.8" x2="970.0" y2="670.8" stroke="#d8d8d8" stroke-width="1.1"/>
<line x1="858.8" y1="578.5" x2="1116.3" y2="689.0" stroke="#d8d8d8" stroke-width="1.1"/>
<line x1="1238.0" y1="562.9" x2="1021.5" y2="692.9" stroke="#d8d8d8" stroke-width="1.1"/>
<path d="M1026 330.2 L1032 328.0 L1038.5 330.6" fill="none" stroke="#d0d0d0" stroke-width=".9"/>
<path d="M1026 332.9 L1032 330.7 L1038.5 333.3" fill="none" stroke="#d0d0d0" stroke-width=".9"/>
<path d="M1026 335.6 L1032 333.4 L1038.5 336.0" fill="none" stroke="#d0d0d0" stroke-width=".9"/>
<path d="M1026 338.3 L1032 336.1 L1038.5 338.7" fill="none" stroke="#d0d0d0" stroke-width=".9"/>
<path d="M1026 341.0 L1032 338.8 L1038.5 341.4" fill="none" stroke="#d0d0d0" stroke-width=".9"/>
<path d="M1026 343.7 L1032 341.5 L1038.5 344.1" fill="none" stroke="#d0d0d0" stroke-width=".9"/>
<path d="M1026 346.4 L1032 344.2 L1038.5 346.8" fill="none" stroke="#d0d0d0" stroke-width=".9"/>
<path d="M1026 349.1 L1032 346.9 L1038.5 349.5" fill="none" stroke="#d0d0d0" stroke-width=".9"/>
<path d="M1026 351.8 L1032 349.6 L1038.5 352.2" fill="none" stroke="#d0d0d0" stroke-width=".9"/>
<path d="M1026 354.5 L1032 352.3 L1038.5 354.9" fill="none" stroke="#d0d0d0" stroke-width=".9"/>
<path d="M1026 357.2 L1032 355.0 L1038.5 357.6" fill="none" stroke="#d0d0d0" stroke-width=".9"/>
<path d="M1026 359.9 L1032 357.7 L1038.5 360.3" fill="none" stroke="#d0d0d0" stroke-width=".9"/>
<path d="M1026 362.6 L1032 360.4 L1038.5 363.0" fill="none" stroke="#d0d0d0" stroke-width=".9"/>
<path d="M1026 365.3 L1032 363.1 L1038.5 365.7" fill="none" stroke="#d0d0d0" stroke-width=".9"/>
<path d="M1026 368.0 L1032 365.8 L1038.5 368.4" fill="none" stroke="#d0d0d0" stroke-width=".9"/>
<path d="M1026 370.7 L1032 368.5 L1038.5 371.1" fill="none" stroke="#d0d0d0" stroke-width=".9"/>
<path d="M1026 373.4 L1032 371.2 L1038.5 373.8" fill="none" stroke="#d0d0d0" stroke-width=".9"/>
<path d="M1026 376.1 L1032 373.9 L1038.5 376.5" fill="none" stroke="#d0d0d0" stroke-width=".9"/>
<path d="M1026 378.8 L1032 376.6 L1038.5 379.2" fill="none" stroke="#d0d0d0" stroke-width=".9"/>
<path d="M1026 381.5 L1032 379.3 L1038.5 381.9" fill="none" stroke="#d0d0d0" stroke-width=".9"/>
<path d="M1026 384.2 L1032 382.0 L1038.5 384.6" fill="none" stroke="#d0d0d0" stroke-width=".9"/>
<path d="M1026 386.9 L1032 384.7 L1038.5 387.3" fill="none" stroke="#d0d0d0" stroke-width=".9"/>
<path d="M1026 389.6 L1032 387.4 L1038.5 390.0" fill="none" stroke="#d0d0d0" stroke-width=".9"/>
<path d="M1026 392.3 L1032 390.1 L1038.5 392.7" fill="none" stroke="#d0d0d0" stroke-width=".9"/>
<path d="M1026 395.0 L1032 392.8 L1038.5 395.4" fill="none" stroke="#d0d0d0" stroke-width=".9"/>
<path d="M1026 397.7 L1032 395.5 L1038.5 398.1" fill="none" stroke="#d0d0d0" stroke-width=".9"/>
<path d="M1026 400.4 L1032 398.2 L1038.5 400.8" fill="none" stroke="#d0d0d0" stroke-width=".9"/>
<path d="M1026 403.1 L1032 400.9 L1038.5 403.5" fill="none" stroke="#d0d0d0" stroke-width=".9"/>
<path d="M1026 405.8 L1032 403.6 L1038.5 406.2" fill="none" stroke="#d0d0d0" stroke-width=".9"/>
<path d="M1026 408.5 L1032 406.3 L1038.5 408.9" fill="none" stroke="#d0d0d0" stroke-width=".9"/>
<path d="M1026 411.2 L1032 409.0 L1038.5 411.6" fill="none" stroke="#d0d0d0" stroke-width=".9"/>
<path d="M1026 413.9 L1032 411.7 L1038.5 414.3" fill="none" stroke="#d0d0d0" stroke-width=".9"/>
<path d="M1026 416.6 L1032 414.4 L1038.5 417.0" fill="none" stroke="#d0d0d0" stroke-width=".9"/>
<path d="M1026 419.3 L1032 417.1 L1038.5 419.7" fill="none" stroke="#d0d0d0" stroke-width=".9"/>
<path d="M1026 422.0 L1032 419.8 L1038.5 422.4" fill="none" stroke="#d0d0d0" stroke-width=".9"/>
<path d="M1026 424.7 L1032 422.5 L1038.5 425.1" fill="none" stroke="#d0d0d0" stroke-width=".9"/>
<path d="M1026 427.4 L1032 425.2 L1038.5 427.8" fill="none" stroke="#d0d0d0" stroke-width=".9"/>
<path d="M1026 430.1 L1032 427.9 L1038.5 430.5" fill="none" stroke="#d0d0d0" stroke-width=".9"/>
<path d="M1026 432.8 L1032 430.6 L1038.5 433.2" fill="none" stroke="#d0d0d0" stroke-width=".9"/>
<path d="M1026 435.5 L1032 433.3 L1038.5 435.9" fill="none" stroke="#d0d0d0" stroke-width=".9"/>
<path d="M1026 438.2 L1032 436.0 L1038.5 438.6" fill="none" stroke="#d0d0d0" stroke-width=".9"/>
<path d="M1026 440.9 L1032 438.7 L1038.5 441.3" fill="none" stroke="#d0d0d0" stroke-width=".9"/>
<path d="M1026 443.6 L1032 441.4 L1038.5 444.0" fill="none" stroke="#d0d0d0" stroke-width=".9"/>
<path d="M1026 446.3 L1032 444.1 L1038.5 446.7" fill="none" stroke="#d0d0d0" stroke-width=".9"/>
<path d="M1026 449.0 L1032 446.8 L1038.5 449.4" fill="none" stroke="#d0d0d0" stroke-width=".9"/>
<path d="M1026 451.7 L1032 449.5 L1038.5 452.1" fill="none" stroke="#d0d0d0" stroke-width=".9"/>
<path d="M1026 454.4 L1032 452.2 L1038.5 454.8" fill="none" stroke="#d0d0d0" stroke-width=".9"/>
<path d="M1026 457.1 L1032 454.9 L1038.5 457.5" fill="none" stroke="#d0d0d0" stroke-width=".9"/>
<path d="M1026 459.8 L1032 457.6 L1038.5 460.2" fill="none" stroke="#d0d0d0" stroke-width=".9"/>
<path d="M1026 462.5 L1032 460.3 L1038.5 462.9" fill="none" stroke="#d0d0d0" stroke-width=".9"/>
<path d="M1026 465.2 L1032 463.0 L1038.5 465.6" fill="none" stroke="#d0d0d0" stroke-width=".9"/>
<path d="M1026 467.9 L1032 465.7 L1038.5 468.3" fill="none" stroke="#d0d0d0" stroke-width=".9"/>
<path d="M1026 470.6 L1032 468.4 L1038.5 471.0" fill="none" stroke="#d0d0d0" stroke-width=".9"/>
<path d="M1026 473.3 L1032 471.1 L1038.5 473.7" fill="none" stroke="#d0d0d0" stroke-width=".9"/>
<path d="M1026 476.0 L1032 473.8 L1038.5 476.4" fill="none" stroke="#d0d0d0" stroke-width=".9"/>
<line x1="817.5" y1="394.2" x2="822.5" y2="393.0" stroke="#d0d0d0" stroke-width=".9"/>
<line x1="817.5" y1="396.8" x2="822.5" y2="395.6" stroke="#d0d0d0" stroke-width=".9"/>
<line x1="817.5" y1="399.4" x2="822.5" y2="398.2" stroke="#d0d0d0" stroke-width=".9"/>
<line x1="817.5" y1="402.0" x2="822.5" y2="400.8" stroke="#d0d0d0" stroke-width=".9"/>
<line x1="817.5" y1="404.6" x2="822.5" y2="403.4" stroke="#d0d0d0" stroke-width=".9"/>
<line x1="817.5" y1="407.2" x2="822.5" y2="406.0" stroke="#d0d0d0" stroke-width=".9"/>
<line x1="817.5" y1="409.8" x2="822.5" y2="408.6" stroke="#d0d0d0" stroke-width=".9"/>
<line x1="817.5" y1="412.4" x2="822.5" y2="411.2" stroke="#d0d0d0" stroke-width=".9"/>
<line x1="817.5" y1="415.0" x2="822.5" y2="413.8" stroke="#d0d0d0" stroke-width=".9"/>
<line x1="817.5" y1="417.6" x2="822.5" y2="416.4" stroke="#d0d0d0" stroke-width=".9"/>
<line x1="817.5" y1="420.2" x2="822.5" y2="419.0" stroke="#d0d0d0" stroke-width=".9"/>
<line x1="817.5" y1="422.8" x2="822.5" y2="421.6" stroke="#d0d0d0" stroke-width=".9"/>
<line x1="817.5" y1="425.4" x2="822.5" y2="424.2" stroke="#d0d0d0" stroke-width=".9"/>
<line x1="817.5" y1="428.0" x2="822.5" y2="426.8" stroke="#d0d0d0" stroke-width=".9"/>
<line x1="817.5" y1="430.6" x2="822.5" y2="429.4" stroke="#d0d0d0" stroke-width=".9"/>
<line x1="817.5" y1="433.2" x2="822.5" y2="432.0" stroke="#d0d0d0" stroke-width=".9"/>
<line x1="817.5" y1="435.8" x2="822.5" y2="434.6" stroke="#d0d0d0" stroke-width=".9"/>
<line x1="817.5" y1="438.4" x2="822.5" y2="437.2" stroke="#d0d0d0" stroke-width=".9"/>
<line x1="817.5" y1="441.0" x2="822.5" y2="439.8" stroke="#d0d0d0" stroke-width=".9"/>
<line x1="817.5" y1="443.6" x2="822.5" y2="442.4" stroke="#d0d0d0" stroke-width=".9"/>
<line x1="817.5" y1="446.2" x2="822.5" y2="445.0" stroke="#d0d0d0" stroke-width=".9"/>
<line x1="817.5" y1="448.8" x2="822.5" y2="447.6" stroke="#d0d0d0" stroke-width=".9"/>
<line x1="817.5" y1="451.4" x2="822.5" y2="450.2" stroke="#d0d0d0" stroke-width=".9"/>
<line x1="817.5" y1="454.0" x2="822.5" y2="452.8" stroke="#d0d0d0" stroke-width=".9"/>
<line x1="817.5" y1="456.6" x2="822.5" y2="455.4" stroke="#d0d0d0" stroke-width=".9"/>
<line x1="817.5" y1="459.2" x2="822.5" y2="458.0" stroke="#d0d0d0" stroke-width=".9"/>
<line x1="817.5" y1="461.8" x2="822.5" y2="460.6" stroke="#d0d0d0" stroke-width=".9"/>
<line x1="817.5" y1="464.4" x2="822.5" y2="463.2" stroke="#d0d0d0" stroke-width=".9"/>
<line x1="817.5" y1="467.0" x2="822.5" y2="465.8" stroke="#d0d0d0" stroke-width=".9"/>
<line x1="817.5" y1="469.6" x2="822.5" y2="468.4" stroke="#d0d0d0" stroke-width=".9"/>
<line x1="817.5" y1="472.2" x2="822.5" y2="471.0" stroke="#d0d0d0" stroke-width=".9"/>
<line x1="817.5" y1="474.8" x2="822.5" y2="473.6" stroke="#d0d0d0" stroke-width=".9"/>
<line x1="817.5" y1="477.4" x2="822.5" y2="476.2" stroke="#d0d0d0" stroke-width=".9"/>
<line x1="817.5" y1="480.0" x2="822.5" y2="478.8" stroke="#d0d0d0" stroke-width=".9"/>
<line x1="817.5" y1="482.6" x2="822.5" y2="481.4" stroke="#d0d0d0" stroke-width=".9"/>
<line x1="817.5" y1="485.2" x2="822.5" y2="484.0" stroke="#d0d0d0" stroke-width=".9"/>
<line x1="817.5" y1="487.8" x2="822.5" y2="486.6" stroke="#d0d0d0" stroke-width=".9"/>
<line x1="817.5" y1="490.4" x2="822.5" y2="489.2" stroke="#d0d0d0" stroke-width=".9"/>
<line x1="817.5" y1="493.0" x2="822.5" y2="491.8" stroke="#d0d0d0" stroke-width=".9"/>
<line x1="817.5" y1="495.6" x2="822.5" y2="494.4" stroke="#d0d0d0" stroke-width=".9"/>
<line x1="817.5" y1="498.2" x2="822.5" y2="497.0" stroke="#d0d0d0" stroke-width=".9"/>
<line x1="817.5" y1="500.8" x2="822.5" y2="499.6" stroke="#d0d0d0" stroke-width=".9"/>
<line x1="817.5" y1="503.4" x2="822.5" y2="502.2" stroke="#d0d0d0" stroke-width=".9"/>
<line x1="817.5" y1="506.0" x2="822.5" y2="504.8" stroke="#d0d0d0" stroke-width=".9"/>
<line x1="817.5" y1="508.6" x2="822.5" y2="507.4" stroke="#d0d0d0" stroke-width=".9"/>
<line x1="817.5" y1="511.2" x2="822.5" y2="510.0" stroke="#d0d0d0" stroke-width=".9"/>
<line x1="817.5" y1="513.8" x2="822.5" y2="512.6" stroke="#d0d0d0" stroke-width=".9"/>
<line x1="817.5" y1="516.4" x2="822.5" y2="515.2" stroke="#d0d0d0" stroke-width=".9"/>
<line x1="817.5" y1="519.0" x2="822.5" y2="517.8" stroke="#d0d0d0" stroke-width=".9"/>
<line x1="817.5" y1="521.6" x2="822.5" y2="520.4" stroke="#d0d0d0" stroke-width=".9"/>
<line x1="817.5" y1="524.2" x2="822.5" y2="523.0" stroke="#d0d0d0" stroke-width=".9"/>
<line x1="817.5" y1="526.8" x2="822.5" y2="525.6" stroke="#d0d0d0" stroke-width=".9"/>
<line x1="817.5" y1="529.4" x2="822.5" y2="528.2" stroke="#d0d0d0" stroke-width=".9"/>
<line x1="817.5" y1="532.0" x2="822.5" y2="530.8" stroke="#d0d0d0" stroke-width=".9"/>
<line x1="817.5" y1="534.6" x2="822.5" y2="533.4" stroke="#d0d0d0" stroke-width=".9"/>
<line x1="817.5" y1="537.2" x2="822.5" y2="536.0" stroke="#d0d0d0" stroke-width=".9"/>
<line x1="817.5" y1="539.8" x2="822.5" y2="538.6" stroke="#d0d0d0" stroke-width=".9"/>
<line x1="817.5" y1="542.4" x2="822.5" y2="541.2" stroke="#d0d0d0" stroke-width=".9"/>
<line x1="817.5" y1="545.0" x2="822.5" y2="543.8" stroke="#d0d0d0" stroke-width=".9"/>
<line x1="817.5" y1="547.6" x2="822.5" y2="546.4" stroke="#d0d0d0" stroke-width=".9"/>
<line x1="817.5" y1="550.2" x2="822.5" y2="549.0" stroke="#d0d0d0" stroke-width=".9"/>
<line x1="817.5" y1="552.8" x2="822.5" y2="551.6" stroke="#d0d0d0" stroke-width=".9"/>
<line x1="817.5" y1="555.4" x2="822.5" y2="554.2" stroke="#d0d0d0" stroke-width=".9"/>
<line x1="817.5" y1="558.0" x2="822.5" y2="556.8" stroke="#d0d0d0" stroke-width=".9"/>
<line x1="817.5" y1="560.6" x2="822.5" y2="559.4" stroke="#d0d0d0" stroke-width=".9"/>
<line x1="817.5" y1="563.2" x2="822.5" y2="562.0" stroke="#d0d0d0" stroke-width=".9"/>
<line x1="817.5" y1="565.8" x2="822.5" y2="564.6" stroke="#d0d0d0" stroke-width=".9"/>
<line x1="817.5" y1="568.4" x2="822.5" y2="567.2" stroke="#d0d0d0" stroke-width=".9"/>
<line x1="817.5" y1="571.0" x2="822.5" y2="569.8" stroke="#d0d0d0" stroke-width=".9"/>
<line x1="817.5" y1="573.6" x2="822.5" y2="572.4" stroke="#d0d0d0" stroke-width=".9"/>
<line x1="817.5" y1="576.2" x2="822.5" y2="575.0" stroke="#d0d0d0" stroke-width=".9"/>
<line x1="817.5" y1="578.8" x2="822.5" y2="577.6" stroke="#d0d0d0" stroke-width=".9"/>
<line x1="817.5" y1="581.4" x2="822.5" y2="580.2" stroke="#d0d0d0" stroke-width=".9"/>
<line x1="817.5" y1="584.0" x2="822.5" y2="582.8" stroke="#d0d0d0" stroke-width=".9"/>
<line x1="817.5" y1="586.6" x2="822.5" y2="585.4" stroke="#d0d0d0" stroke-width=".9"/>
<line x1="817.5" y1="589.2" x2="822.5" y2="588.0" stroke="#d0d0d0" stroke-width=".9"/>
<line x1="817.5" y1="591.8" x2="822.5" y2="590.6" stroke="#d0d0d0" stroke-width=".9"/>
<line x1="817.5" y1="594.4" x2="822.5" y2="593.2" stroke="#d0d0d0" stroke-width=".9"/>
<line x1="817.5" y1="597.0" x2="822.5" y2="595.8" stroke="#d0d0d0" stroke-width=".9"/>
<line x1="817.5" y1="599.6" x2="822.5" y2="598.4" stroke="#d0d0d0" stroke-width=".9"/>
<line x1="1282.0" y1="369.2" x2="1291.0" y2="370.4" stroke="#d0d0d0" stroke-width=".9"/>
<line x1="1282.0" y1="371.8" x2="1291.0" y2="373.0" stroke="#d0d0d0" stroke-width=".9"/>
<line x1="1282.0" y1="374.4" x2="1291.0" y2="375.6" stroke="#d0d0d0" stroke-width=".9"/>
<line x1="1282.0" y1="377.0" x2="1291.0" y2="378.2" stroke="#d0d0d0" stroke-width=".9"/>
<line x1="1282.0" y1="379.6" x2="1291.0" y2="380.8" stroke="#d0d0d0" stroke-width=".9"/>
<line x1="1282.0" y1="382.2" x2="1291.0" y2="383.4" stroke="#d0d0d0" stroke-width=".9"/>
<line x1="1282.0" y1="384.8" x2="1291.0" y2="386.0" stroke="#d0d0d0" stroke-width=".9"/>
<line x1="1282.0" y1="387.4" x2="1291.0" y2="388.6" stroke="#d0d0d0" stroke-width=".9"/>
<line x1="1282.0" y1="390.0" x2="1291.0" y2="391.2" stroke="#d0d0d0" stroke-width=".9"/>
<line x1="1282.0" y1="392.6" x2="1291.0" y2="393.8" stroke="#d0d0d0" stroke-width=".9"/>
<line x1="1282.0" y1="395.2" x2="1291.0" y2="396.4" stroke="#d0d0d0" stroke-width=".9"/>
<line x1="1282.0" y1="397.8" x2="1291.0" y2="399.0" stroke="#d0d0d0" stroke-width=".9"/>
<line x1="1282.0" y1="400.4" x2="1291.0" y2="401.6" stroke="#d0d0d0" stroke-width=".9"/>
<line x1="1282.0" y1="403.0" x2="1291.0" y2="404.2" stroke="#d0d0d0" stroke-width=".9"/>
<line x1="1282.0" y1="405.6" x2="1291.0" y2="406.8" stroke="#d0d0d0" stroke-width=".9"/>
<line x1="1282.0" y1="408.2" x2="1291.0" y2="409.4" stroke="#d0d0d0" stroke-width=".9"/>
<line x1="1282.0" y1="410.8" x2="1291.0" y2="412.0" stroke="#d0d0d0" stroke-width=".9"/>
<line x1="1282.0" y1="413.4" x2="1291.0" y2="414.6" stroke="#d0d0d0" stroke-width=".9"/>
<line x1="1282.0" y1="416.0" x2="1291.0" y2="417.2" stroke="#d0d0d0" stroke-width=".9"/>
<line x1="1282.0" y1="418.6" x2="1291.0" y2="419.8" stroke="#d0d0d0" stroke-width=".9"/>
<line x1="1282.0" y1="421.2" x2="1291.0" y2="422.4" stroke="#d0d0d0" stroke-width=".9"/>
<line x1="1282.0" y1="423.8" x2="1291.0" y2="425.0" stroke="#d0d0d0" stroke-width=".9"/>
<line x1="1282.0" y1="426.4" x2="1291.0" y2="427.6" stroke="#d0d0d0" stroke-width=".9"/>
<line x1="1282.0" y1="429.0" x2="1291.0" y2="430.2" stroke="#d0d0d0" stroke-width=".9"/>
<line x1="1282.0" y1="431.6" x2="1291.0" y2="432.8" stroke="#d0d0d0" stroke-width=".9"/>
<line x1="1282.0" y1="434.2" x2="1291.0" y2="435.4" stroke="#d0d0d0" stroke-width=".9"/>
<line x1="1282.0" y1="436.8" x2="1291.0" y2="438.0" stroke="#d0d0d0" stroke-width=".9"/>
<line x1="1282.0" y1="439.4" x2="1291.0" y2="440.6" stroke="#d0d0d0" stroke-width=".9"/>
<line x1="1282.0" y1="442.0" x2="1291.0" y2="443.2" stroke="#d0d0d0" stroke-width=".9"/>
<line x1="1282.0" y1="444.6" x2="1291.0" y2="445.8" stroke="#d0d0d0" stroke-width=".9"/>
<line x1="1282.0" y1="447.2" x2="1291.0" y2="448.4" stroke="#d0d0d0" stroke-width=".9"/>
<line x1="1282.0" y1="449.8" x2="1291.0" y2="451.0" stroke="#d0d0d0" stroke-width=".9"/>
<line x1="1282.0" y1="452.4" x2="1291.0" y2="453.6" stroke="#d0d0d0" stroke-width=".9"/>
<line x1="1282.0" y1="455.0" x2="1291.0" y2="456.2" stroke="#d0d0d0" stroke-width=".9"/>
<line x1="1282.0" y1="457.6" x2="1291.0" y2="458.8" stroke="#d0d0d0" stroke-width=".9"/>
<line x1="1282.0" y1="460.2" x2="1291.0" y2="461.4" stroke="#d0d0d0" stroke-width=".9"/>
<line x1="1282.0" y1="462.8" x2="1291.0" y2="464.0" stroke="#d0d0d0" stroke-width=".9"/>
<line x1="1282.0" y1="465.4" x2="1291.0" y2="466.6" stroke="#d0d0d0" stroke-width=".9"/>
<line x1="1282.0" y1="468.0" x2="1291.0" y2="469.2" stroke="#d0d0d0" stroke-width=".9"/>
<line x1="1282.0" y1="470.6" x2="1291.0" y2="471.8" stroke="#d0d0d0" stroke-width=".9"/>
<line x1="1282.0" y1="473.2" x2="1291.0" y2="474.4" stroke="#d0d0d0" stroke-width=".9"/>
<line x1="1282.0" y1="475.8" x2="1291.0" y2="477.0" stroke="#d0d0d0" stroke-width=".9"/>
<line x1="1282.0" y1="478.4" x2="1291.0" y2="479.6" stroke="#d0d0d0" stroke-width=".9"/>
<line x1="1282.0" y1="481.0" x2="1291.0" y2="482.2" stroke="#d0d0d0" stroke-width=".9"/>
<line x1="1282.0" y1="483.6" x2="1291.0" y2="484.8" stroke="#d0d0d0" stroke-width=".9"/>
<line x1="1282.0" y1="486.2" x2="1291.0" y2="487.4" stroke="#d0d0d0" stroke-width=".9"/>
<line x1="1282.0" y1="488.8" x2="1291.0" y2="490.0" stroke="#d0d0d0" stroke-width=".9"/>
<line x1="1282.0" y1="491.4" x2="1291.0" y2="492.6" stroke="#d0d0d0" stroke-width=".9"/>
<line x1="1282.0" y1="494.0" x2="1291.0" y2="495.2" stroke="#d0d0d0" stroke-width=".9"/>
<line x1="1282.0" y1="496.6" x2="1291.0" y2="497.8" stroke="#d0d0d0" stroke-width=".9"/>
<line x1="1282.0" y1="499.2" x2="1291.0" y2="500.4" stroke="#d0d0d0" stroke-width=".9"/>
<line x1="1282.0" y1="501.8" x2="1291.0" y2="503.0" stroke="#d0d0d0" stroke-width=".9"/>
<line x1="1282.0" y1="504.4" x2="1291.0" y2="505.6" stroke="#d0d0d0" stroke-width=".9"/>
<line x1="1282.0" y1="507.0" x2="1291.0" y2="508.2" stroke="#d0d0d0" stroke-width=".9"/>
<line x1="1282.0" y1="509.6" x2="1291.0" y2="510.8" stroke="#d0d0d0" stroke-width=".9"/>
<line x1="1282.0" y1="512.2" x2="1291.0" y2="513.4" stroke="#d0d0d0" stroke-width=".9"/>
<line x1="1282.0" y1="514.8" x2="1291.0" y2="516.0" stroke="#d0d0d0" stroke-width=".9"/>
<line x1="1282.0" y1="517.4" x2="1291.0" y2="518.6" stroke="#d0d0d0" stroke-width=".9"/>
<line x1="1282.0" y1="520.0" x2="1291.0" y2="521.2" stroke="#d0d0d0" stroke-width=".9"/>
<line x1="1282.0" y1="522.6" x2="1291.0" y2="523.8" stroke="#d0d0d0" stroke-width=".9"/>
<line x1="1282.0" y1="525.2" x2="1291.0" y2="526.4" stroke="#d0d0d0" stroke-width=".9"/>
<line x1="1282.0" y1="527.8" x2="1291.0" y2="529.0" stroke="#d0d0d0" stroke-width=".9"/>
<line x1="1282.0" y1="530.4" x2="1291.0" y2="531.6" stroke="#d0d0d0" stroke-width=".9"/>
<line x1="1282.0" y1="533.0" x2="1291.0" y2="534.2" stroke="#d0d0d0" stroke-width=".9"/>
<line x1="1282.0" y1="535.6" x2="1291.0" y2="536.8" stroke="#d0d0d0" stroke-width=".9"/>
<line x1="1282.0" y1="538.2" x2="1291.0" y2="539.4" stroke="#d0d0d0" stroke-width=".9"/>
<line x1="1282.0" y1="540.8" x2="1291.0" y2="542.0" stroke="#d0d0d0" stroke-width=".9"/>
<line x1="1282.0" y1="543.4" x2="1291.0" y2="544.6" stroke="#d0d0d0" stroke-width=".9"/>
<line x1="1282.0" y1="546.0" x2="1291.0" y2="547.2" stroke="#d0d0d0" stroke-width=".9"/>
<line x1="1282.0" y1="548.6" x2="1291.0" y2="549.8" stroke="#d0d0d0" stroke-width=".9"/>
<line x1="1282.0" y1="551.2" x2="1291.0" y2="552.4" stroke="#d0d0d0" stroke-width=".9"/>
<line x1="1282.0" y1="553.8" x2="1291.0" y2="555.0" stroke="#d0d0d0" stroke-width=".9"/>
<line x1="1282.0" y1="556.4" x2="1291.0" y2="557.6" stroke="#d0d0d0" stroke-width=".9"/>
<line x1="1282.0" y1="559.0" x2="1291.0" y2="560.2" stroke="#d0d0d0" stroke-width=".9"/>
<line x1="1282.0" y1="561.6" x2="1291.0" y2="562.8" stroke="#d0d0d0" stroke-width=".9"/>
<line x1="1282.0" y1="564.2" x2="1291.0" y2="565.4" stroke="#d0d0d0" stroke-width=".9"/>
<line x1="1282.0" y1="566.8" x2="1291.0" y2="568.0" stroke="#d0d0d0" stroke-width=".9"/>
<line x1="1282.0" y1="569.4" x2="1291.0" y2="570.6" stroke="#d0d0d0" stroke-width=".9"/>
<line x1="1282.0" y1="572.0" x2="1291.0" y2="573.2" stroke="#d0d0d0" stroke-width=".9"/>
<line x1="1282.0" y1="574.6" x2="1291.0" y2="575.8" stroke="#d0d0d0" stroke-width=".9"/>
<line x1="1282.0" y1="577.2" x2="1291.0" y2="578.4" stroke="#d0d0d0" stroke-width=".9"/>
<line x1="1282.0" y1="579.8" x2="1291.0" y2="581.0" stroke="#d0d0d0" stroke-width=".9"/>
<line x1="1282.0" y1="582.4" x2="1291.0" y2="583.6" stroke="#d0d0d0" stroke-width=".9"/>
<line x1="1282.0" y1="585.0" x2="1291.0" y2="586.2" stroke="#d0d0d0" stroke-width=".9"/>
<path d="M873.5 563.0 v7 l6 3" fill="none" stroke="#e0e0e0" stroke-width="1.1"/>
<path d="M887.5 554.5 v7 l6 3" fill="none" stroke="#e0e0e0" stroke-width="1.1"/>
<path d="M917.0 537.0 v7 l6 3" fill="none" stroke="#e0e0e0" stroke-width="1.1"/>
<path d="M931.0 528.5 v7 l6 3" fill="none" stroke="#e0e0e0" stroke-width="1.1"/>
<path d="M959.5 511.0 v7 l6 3" fill="none" stroke="#e0e0e0" stroke-width="1.1"/>
<path d="M975.0 502.5 v7 l6 3" fill="none" stroke="#e0e0e0" stroke-width="1.1"/>
<path d="M1003.0 484.0 v7 l6 3" fill="none" stroke="#e0e0e0" stroke-width="1.1"/>
<path d="M844.0 580.5 v7 l6 3" fill="none" stroke="#e0e0e0" stroke-width="1.1"/>
<path d="M830.0 588.5 v7 l6 3" fill="none" stroke="#e0e0e0" stroke-width="1.1"/>
<path d="M1152.5 518.5 v7 l-6 3" fill="none" stroke="#e0e0e0" stroke-width="1.1"/>
<path d="M1170.0 526.0 v7 l-6 3" fill="none" stroke="#e0e0e0" stroke-width="1.1"/>
<path d="M1203.5 541.5 v7 l-6 3" fill="none" stroke="#e0e0e0" stroke-width="1.1"/>
<path d="M1221.0 548.0 v7 l-6 3" fill="none" stroke="#e0e0e0" stroke-width="1.1"/>
<path d="M1256.0 562.0 v7 l-6 3" fill="none" stroke="#e0e0e0" stroke-width="1.1"/>
<path d="M1273.0 568.5 v7 l-6 3" fill="none" stroke="#e0e0e0" stroke-width="1.1"/>
<path d="M1068.5 484.5 v7 l-6 3" fill="none" stroke="#e0e0e0" stroke-width="1.1"/>
<path d="M1119.0 502.0 v7 l-6 3" fill="none" stroke="#e0e0e0" stroke-width="1.1"/>
<line x1="852.0" y1="612.0" x2="857.0" y2="609.5" stroke="#d8d8d8" stroke-width="1.2"/>
<line x1="889.0" y1="624.0" x2="894.0" y2="621.5" stroke="#d8d8d8" stroke-width="1.2"/>
<line x1="903.0" y1="634.0" x2="908.0" y2="631.5" stroke="#d8d8d8" stroke-width="1.2"/>
<line x1="938.0" y1="642.0" x2="943.0" y2="639.5" stroke="#d8d8d8" stroke-width="1.2"/>
<line x1="956.0" y1="651.0" x2="961.0" y2="648.5" stroke="#d8d8d8" stroke-width="1.2"/>
<line x1="990.0" y1="663.0" x2="995.0" y2="660.5" stroke="#d8d8d8" stroke-width="1.2"/>
<line x1="1008.0" y1="671.0" x2="1013.0" y2="668.5" stroke="#d8d8d8" stroke-width="1.2"/>
<line x1="1041.0" y1="687.0" x2="1046.0" y2="684.5" stroke="#d8d8d8" stroke-width="1.2"/>
<line x1="1059.0" y1="695.0" x2="1064.0" y2="692.5" stroke="#d8d8d8" stroke-width="1.2"/>
<line x1="820.0" y1="602.0" x2="825.0" y2="599.5" stroke="#d8d8d8" stroke-width="1.2"/>
<line x1="835.0" y1="609.0" x2="840.0" y2="606.5" stroke="#d8d8d8" stroke-width="1.2"/>
<line x1="1252.0" y1="590.0" x2="1257.0" y2="592.5" stroke="#d8d8d8" stroke-width="1.2"/>
<line x1="1266.0" y1="597.0" x2="1271.0" y2="599.5" stroke="#d8d8d8" stroke-width="1.2"/>
<line x1="1232.0" y1="613.0" x2="1237.0" y2="615.5" stroke="#d8d8d8" stroke-width="1.2"/>
<line x1="1244.0" y1="619.0" x2="1249.0" y2="621.5" stroke="#d8d8d8" stroke-width="1.2"/>
<line x1="1210.0" y1="628.0" x2="1215.0" y2="630.5" stroke="#d8d8d8" stroke-width="1.2"/>
<line x1="1225.0" y1="634.0" x2="1230.0" y2="636.5" stroke="#d8d8d8" stroke-width="1.2"/>
<line x1="1167.0" y1="660.0" x2="1172.0" y2="662.5" stroke="#d8d8d8" stroke-width="1.2"/>
<line x1="1181.0" y1="666.0" x2="1186.0" y2="668.5" stroke="#d8d8d8" stroke-width="1.2"/>
<line x1="1128.0" y1="685.0" x2="1133.0" y2="687.5" stroke="#d8d8d8" stroke-width="1.2"/>
<line x1="1140.0" y1="691.0" x2="1145.0" y2="693.5" stroke="#d8d8d8" stroke-width="1.2"/>
<rect x="1092.5" y="442" width="19.5" height="101" rx="9.5" ry="9" fill="#ff0000"/>
<circle cx="1093.5" cy="448" r="2.2" fill="#ff0000"/><circle cx="1111" cy="451" r="2.2" fill="#ff0000"/>
<circle cx="1093.5" cy="454" r="2.2" fill="#ff0000"/><circle cx="1111" cy="457" r="2.2" fill="#ff0000"/>
<circle cx="1093.5" cy="460" r="2.2" fill="#ff0000"/><circle cx="1111" cy="463" r="2.2" fill="#ff0000"/>
<circle cx="1093.5" cy="466" r="2.2" fill="#ff0000"/><circle cx="1111" cy="469" r="2.2" fill="#ff0000"/>
<circle cx="1093.5" cy="472" r="2.2" fill="#ff0000"/><circle cx="1111" cy="475" r="2.2" fill="#ff0000"/>
<circle cx="1093.5" cy="478" r="2.2" fill="#ff0000"/><circle cx="1111" cy="481" r="2.2" fill="#ff0000"/>
<circle cx="1093.5" cy="484" r="2.2" fill="#ff0000"/><circle cx="1111" cy="487" r="2.2" fill="#ff0000"/>
<circle cx="1093.5" cy="490" r="2.2" fill="#ff0000"/><circle cx="1111" cy="493" r="2.2" fill="#ff0000"/>
<circle cx="1093.5" cy="496" r="2.2" fill="#ff0000"/><circle cx="1111" cy="499" r="2.2" fill="#ff0000"/>
<circle cx="1093.5" cy="502" r="2.2" fill="#ff0000"/><circle cx="1111" cy="505" r="2.2" fill="#ff0000"/>
<circle cx="1093.5" cy="508" r="2.2" fill="#ff0000"/><circle cx="1111" cy="511" r="2.2" fill="#ff0000"/>
<circle cx="1093.5" cy="514" r="2.2" fill="#ff0000"/><circle cx="1111" cy="517" r="2.2" fill="#ff0000"/>
<circle cx="1093.5" cy="520" r="2.2" fill="#ff0000"/><circle cx="1111" cy="523" r="2.2" fill="#ff0000"/>
<circle cx="1093.5" cy="526" r="2.2" fill="#ff0000"/><circle cx="1111" cy="529" r="2.2" fill="#ff0000"/>
<circle cx="1093.5" cy="532" r="2.2" fill="#ff0000"/><circle cx="1111" cy="535" r="2.2" fill="#ff0000"/>
<circle cx="1093.5" cy="538" r="2.2" fill="#ff0000"/><circle cx="1111" cy="541" r="2.2" fill="#ff0000"/>
<circle cx="1111.0" cy="415.5" r="2.1" fill="#dcdc10"/>
<circle cx="1116.2" cy="417.8" r="2.1" fill="#dcdc10"/>
<circle cx="1121.4" cy="420.0" r="2.1" fill="#dcdc10"/>
<circle cx="1126.6" cy="422.2" r="2.1" fill="#dcdc10"/>
<circle cx="1131.8" cy="424.5" r="2.1" fill="#dcdc10"/>
<circle cx="1137.0" cy="426.8" r="2.1" fill="#dcdc10"/>
<circle cx="1142.2" cy="429.0" r="2.1" fill="#dcdc10"/>
<circle cx="1147.4" cy="431.2" r="2.1" fill="#dcdc10"/>
<circle cx="1152.6" cy="433.5" r="2.1" fill="#dcdc10"/>
<circle cx="1157.8" cy="435.8" r="2.1" fill="#dcdc10"/>
<circle cx="1163.0" cy="438.0" r="2.1" fill="#dcdc10"/>
<circle cx="1103.0" cy="420.2" r="2.1" fill="#dcdc10"/>
<circle cx="1108.2" cy="422.4" r="2.1" fill="#dcdc10"/>
<circle cx="1113.5" cy="424.7" r="2.1" fill="#dcdc10"/>
<circle cx="1118.6" cy="426.9" r="2.1" fill="#dcdc10"/>
<circle cx="1123.8" cy="429.2" r="2.1" fill="#dcdc10"/>
<circle cx="1129.0" cy="431.4" r="2.1" fill="#dcdc10"/>
<circle cx="1134.2" cy="433.7" r="2.1" fill="#dcdc10"/>
<circle cx="1139.5" cy="435.9" r="2.1" fill="#dcdc10"/>
<circle cx="1144.6" cy="438.2" r="2.1" fill="#dcdc10"/>
<circle cx="1149.8" cy="440.4" r="2.1" fill="#dcdc10"/>
<circle cx="1155.0" cy="442.7" r="2.1" fill="#dcdc10"/>
<circle cx="1095.1" cy="424.8" r="2.1" fill="#dcdc10"/>
<circle cx="1100.3" cy="427.1" r="2.1" fill="#dcdc10"/>
<circle cx="1105.5" cy="429.3" r="2.1" fill="#dcdc10"/>
<circle cx="1110.7" cy="431.6" r="2.1" fill="#dcdc10"/>
<circle cx="1115.9" cy="433.8" r="2.1" fill="#dcdc10"/>
<circle cx="1121.1" cy="436.1" r="2.1" fill="#dcdc10"/>
<circle cx="1126.3" cy="438.3" r="2.1" fill="#dcdc10"/>
<circle cx="1131.5" cy="440.6" r="2.1" fill="#dcdc10"/>
<circle cx="1136.7" cy="442.8" r="2.1" fill="#dcdc10"/>
<circle cx="1141.9" cy="445.1" r="2.1" fill="#dcdc10"/>
<circle cx="1147.1" cy="447.3" r="2.1" fill="#dcdc10"/>
<circle cx="1087.2" cy="429.5" r="2.1" fill="#dcdc10"/>
<circle cx="1092.4" cy="431.8" r="2.1" fill="#dcdc10"/>
<circle cx="1097.6" cy="434.0" r="2.1" fill="#dcdc10"/>
<circle cx="1102.8" cy="436.3" r="2.1" fill="#dcdc10"/>
<circle cx="1108.0" cy="438.5" r="2.1" fill="#dcdc10"/>
<circle cx="1113.2" cy="440.8" r="2.1" fill="#dcdc10"/>
<circle cx="1118.4" cy="443.0" r="2.1" fill="#dcdc10"/>
<circle cx="1123.6" cy="445.3" r="2.1" fill="#dcdc10"/>
<circle cx="1128.8" cy="447.5" r="2.1" fill="#dcdc10"/>
<circle cx="1134.0" cy="449.8" r="2.1" fill="#dcdc10"/>
<circle cx="1139.2" cy="452.0" r="2.1" fill="#dcdc10"/>
<circle cx="1079.2" cy="434.2" r="2.1" fill="#dcdc10"/>
<circle cx="1084.4" cy="436.4" r="2.1" fill="#dcdc10"/>
<circle cx="1089.6" cy="438.7" r="2.1" fill="#dcdc10"/>
<circle cx="1094.8" cy="440.9" r="2.1" fill="#dcdc10"/>
<circle cx="1100.0" cy="443.2" r="2.1" fill="#dcdc10"/>
<circle cx="1105.2" cy="445.4" r="2.1" fill="#dcdc10"/>
<circle cx="1110.4" cy="447.7" r="2.1" fill="#dcdc10"/>
<circle cx="1115.6" cy="449.9" r="2.1" fill="#dcdc10"/>
<circle cx="1120.8" cy="452.2" r="2.1" fill="#dcdc10"/>
<circle cx="1126.0" cy="454.4" r="2.1" fill="#dcdc10"/>
<circle cx="1131.2" cy="456.7" r="2.1" fill="#dcdc10"/>
<circle cx="1071.2" cy="438.9" r="2.1" fill="#dcdc10"/>
<circle cx="1076.5" cy="441.1" r="2.1" fill="#dcdc10"/>
<circle cx="1081.7" cy="443.4" r="2.1" fill="#dcdc10"/>
<circle cx="1086.8" cy="445.6" r="2.1" fill="#dcdc10"/>
<circle cx="1092.0" cy="447.9" r="2.1" fill="#dcdc10"/>
<circle cx="1097.2" cy="450.1" r="2.1" fill="#dcdc10"/>
<circle cx="1102.5" cy="452.4" r="2.1" fill="#dcdc10"/>
<circle cx="1107.7" cy="454.6" r="2.1" fill="#dcdc10"/>
<circle cx="1112.8" cy="456.9" r="2.1" fill="#dcdc10"/>
<circle cx="1118.0" cy="459.1" r="2.1" fill="#dcdc10"/>
<circle cx="1123.2" cy="461.4" r="2.1" fill="#dcdc10"/>
<circle cx="1063.3" cy="443.5" r="2.1" fill="#dcdc10"/>
<circle cx="1068.5" cy="445.8" r="2.1" fill="#dcdc10"/>
<circle cx="1073.7" cy="448.0" r="2.1" fill="#dcdc10"/>
<circle cx="1078.9" cy="450.3" r="2.1" fill="#dcdc10"/>
<circle cx="1084.1" cy="452.5" r="2.1" fill="#dcdc10"/>
<circle cx="1089.3" cy="454.8" r="2.1" fill="#dcdc10"/>
<circle cx="1094.5" cy="457.0" r="2.1" fill="#dcdc10"/>
<circle cx="1099.7" cy="459.3" r="2.1" fill="#dcdc10"/>
<circle cx="1104.9" cy="461.5" r="2.1" fill="#dcdc10"/>
<circle cx="1110.1" cy="463.8" r="2.1" fill="#dcdc10"/>
<circle cx="1115.3" cy="466.0" r="2.1" fill="#dcdc10"/>
<circle cx="1055.3" cy="448.2" r="2.1" fill="#dcdc10"/>
<circle cx="1060.5" cy="450.4" r="2.1" fill="#dcdc10"/>
<circle cx="1065.8" cy="452.7" r="2.1" fill="#dcdc10"/>
<circle cx="1070.9" cy="454.9" r="2.1" fill="#dcdc10"/>
<circle cx="1076.1" cy="457.2" r="2.1" fill="#dcdc10"/>
<circle cx="1081.3" cy="459.4" r="2.1" fill="#dcdc10"/>
<circle cx="1086.5" cy="461.7" r="2.1" fill="#dcdc10"/>
<circle cx="1091.8" cy="463.9" r="2.1" fill="#dcdc10"/>
<circle cx="1096.9" cy="466.2" r="2.1" fill="#dcdc10"/>
<circle cx="1102.1" cy="468.4" r="2.1" fill="#dcdc10"/>
<circle cx="1107.3" cy="470.7" r="2.1" fill="#dcdc10"/>
<circle cx="1047.4" cy="452.9" r="2.1" fill="#dcdc10"/>
<circle cx="1052.6" cy="455.1" r="2.1" fill="#dcdc10"/>
<circle cx="1057.8" cy="457.4" r="2.1" fill="#dcdc10"/>
<circle cx="1063.0" cy="459.6" r="2.1" fill="#dcdc10"/>
<circle cx="1068.2" cy="461.9" r="2.1" fill="#dcdc10"/>
<circle cx="1073.4" cy="464.1" r="2.1" fill="#dcdc10"/>
<circle cx="1078.6" cy="466.4" r="2.1" fill="#dcdc10"/>
<circle cx="1083.8" cy="468.6" r="2.1" fill="#dcdc10"/>
<circle cx="1089.0" cy="470.9" r="2.1" fill="#dcdc10"/>
<circle cx="1094.2" cy="473.1" r="2.1" fill="#dcdc10"/>
<circle cx="1099.4" cy="475.4" r="2.1" fill="#dcdc10"/>
<circle cx="1039.5" cy="457.5" r="2.1" fill="#dcdc10"/>
<circle cx="1044.7" cy="459.8" r="2.1" fill="#dcdc10"/>
<circle cx="1049.9" cy="462.0" r="2.1" fill="#dcdc10"/>
<circle cx="1055.0" cy="464.3" r="2.1" fill="#dcdc10"/>
<circle cx="1060.2" cy="466.5" r="2.1" fill="#dcdc10"/>
<circle cx="1065.5" cy="468.8" r="2.1" fill="#dcdc10"/>
<circle cx="1070.7" cy="471.0" r="2.1" fill="#dcdc10"/>
<circle cx="1075.9" cy="473.3" r="2.1" fill="#dcdc10"/>
<circle cx="1081.0" cy="475.5" r="2.1" fill="#dcdc10"/>
<circle cx="1086.2" cy="477.8" r="2.1" fill="#dcdc10"/>
<circle cx="1091.5" cy="480.0" r="2.1" fill="#dcdc10"/>
<text x="0" y="0" font-size="24" text-anchor="middle" dominant-baseline="central" fill="#f2f2f2" stroke="#f2f2f2" stroke-width="0.3" transform="matrix(0.857 -0.515 0.919 0.394 837.5 644.9)">120</text>
<text x="0" y="0" font-size="24" text-anchor="middle" dominant-baseline="central" fill="#f2f2f2" stroke="#f2f2f2" stroke-width="0.3" transform="matrix(0.857 -0.515 0.919 0.394 883.7 668.2)">240</text>
<text x="0" y="0" font-size="24" text-anchor="middle" dominant-baseline="central" fill="#f2f2f2" stroke="#f2f2f2" stroke-width="0.3" transform="matrix(0.857 -0.515 0.919 0.394 935.3 689.3)">360</text>
<text x="0" y="0" font-size="24" text-anchor="middle" dominant-baseline="central" fill="#f2f2f2" stroke="#f2f2f2" stroke-width="0.3" transform="matrix(0.857 -0.515 0.919 0.394 988.6 711.0)">480</text>
<text x="0" y="0" font-size="22" text-anchor="middle" dominant-baseline="central" fill="#f2f2f2" stroke="#f2f2f2" stroke-width="0.3" transform="matrix(1.208 0.481 -0.697 0.717 866.0 703.0)">Y Axis</text>
<text x="0" y="0" font-size="25" text-anchor="middle" dominant-baseline="central" fill="#f2f2f2" stroke="#f2f2f2" stroke-width="0.3" transform="matrix(0.919 0.394 -0.857 0.515 1279.0 622.7)">60</text>
<text x="0" y="0" font-size="25" text-anchor="middle" dominant-baseline="central" fill="#f2f2f2" stroke="#f2f2f2" stroke-width="0.3" transform="matrix(0.919 0.394 -0.857 0.515 1245.3 652.5)">120</text>
<text x="0" y="0" font-size="25" text-anchor="middle" dominant-baseline="central" fill="#f2f2f2" stroke="#f2f2f2" stroke-width="0.3" transform="matrix(0.919 0.394 -0.857 0.515 1202.6 678.4)">180</text>
<text x="0" y="0" font-size="25" text-anchor="middle" dominant-baseline="central" fill="#f2f2f2" stroke="#f2f2f2" stroke-width="0.3" transform="matrix(0.919 0.394 -0.857 0.515 1155.2 703.5)">240</text>
<text x="0" y="0" font-size="21" text-anchor="middle" dominant-baseline="central" fill="#f2f2f2" stroke="#f2f2f2" stroke-width="0.3" transform="matrix(0.986 -0.592 0.515 0.857 1271.0 689.0)">X Axis</text>
<rect x="836" y="390" width="1.5" height="4" fill="#ddd"/>
<rect x="851" y="373" width="1.5" height="4" fill="#ddd"/>
<rect x="877" y="350" width="1.5" height="4" fill="#ddd"/>
<rect x="889" y="338" width="1.5" height="4" fill="#ddd"/>
<rect x="904" y="320" width="1.5" height="4" fill="#ddd"/>
<rect x="1205" y="342" width="1.5" height="4" fill="#ddd"/>
<rect x="1222" y="349" width="1.5" height="4" fill="#ddd"/>
<rect x="1256" y="366" width="1.5" height="4" fill="#ddd"/>
<rect x="1273" y="372" width="1.5" height="4" fill="#ddd"/>
</svg>
<div style="left:273.0px;top:740.0px;width:535.0px;height:279.5px;background:#bdbdbd;border-top:2.5px solid #ececec;border-left:3px solid #e0e0e0;border-right:2.5px solid #4a4a4a;border-bottom:2.5px solid #4a4a4a;box-sizing:border-box"></div>
<div style="left:289.4px;top:933.6px;width:512.6px;height:73.0px;background:#d4d4d4;border-top:5px solid #a4a4a4;border-left:5px solid #a8a8a8;border-right:6px solid #cacaca;border-bottom:5.6px solid #c8c8c8;box-sizing:border-box"></div>
<div style="left:299.9px;top:962.8px;width:50.5px;height:31.6px;background:#f4f4f4;border:1.8px solid #141414;box-sizing:border-box;box-shadow:inset -3px -3px 1px -1px #8a8a8a, inset 2px 2px 1px -1px #fff"></div>
<div style="left:459.1px;top:961.7px;width:50.8px;height:31.0px;background:#f4f4f4;border:1.8px solid #141414;box-sizing:border-box;box-shadow:inset -3px -3px 1px -1px #8a8a8a, inset 2px 2px 1px -1px #fff"></div>
<div style="left:579.4px;top:961.7px;width:50.5px;height:31.0px;background:#a9a9a9;border:1.8px solid #141414;box-sizing:border-box;box-shadow:inset 2px 2px 1px -1px #6a6a6a, inset -2px -2px 1px -1px #e8e8e8"></div>
<div style="left:649.8px;top:961.7px;width:50.5px;height:31.0px;background:#a9a9a9;border:1.8px solid #141414;box-sizing:border-box;box-shadow:inset 2px 2px 1px -1px #6a6a6a, inset -2px -2px 1px -1px #e8e8e8"></div>
<div style="left:722.9px;top:961.7px;width:51.2px;height:31.0px;background:#a9a9a9;border:1.8px solid #141414;box-sizing:border-box;box-shadow:inset 2px 2px 1px -1px #6a6a6a, inset -2px -2px 1px -1px #e8e8e8"></div>
<div style="left:815.3px;top:740.0px;width:498.8px;height:279.5px;background:#bdbdbd;border-top:2.5px solid #ececec;border-left:2.2px solid #f0f0f0;border-right:2.5px solid #4a4a4a;border-bottom:2.5px solid #4a4a4a;box-sizing:border-box"></div>
<svg style="left:831.2px;top:822.2px" width="76" height="44" viewBox="831.2 822.2 76 44">
<defs><radialGradient id="g842" cx="0.4" cy="0.35" r="0.75"><stop offset="0" stop-color="#f6f6f6"/><stop offset=".55" stop-color="#e2e2e2"/><stop offset="1" stop-color="#b4b4b4"/></radialGradient>
<filter id="f842" x="-50%" y="-50%" width="200%" height="200%"><feGaussianBlur stdDeviation="2"/></filter>
<clipPath id="c842"><ellipse cx="865.7" cy="841.7" rx="25.5" ry="9"/></clipPath></defs>
<ellipse cx="869.2" cy="847.2" rx="29" ry="11.5" fill="#7a7a7a" opacity=".55" filter="url(#f842)"/>
<ellipse cx="867.2" cy="842.2" rx="29.2" ry="11.2" fill="#4a4a4a"/>
<ellipse cx="867.2" cy="842.2" rx="28.2" ry="10.3" fill="url(#g842)"/>
<rect x="876.2" y="830.2" width="22" height="24" fill="#0e6a14" clip-path="url(#c842)"/>
</svg>
<svg style="left:830px;top:888px" width="76" height="44" viewBox="830 888 76 44">
<defs><radialGradient id="g908" cx="0.4" cy="0.35" r="0.75"><stop offset="0" stop-color="#f6f6f6"/><stop offset=".55" stop-color="#e2e2e2"/><stop offset="1" stop-color="#b4b4b4"/></radialGradient>
<filter id="f908" x="-50%" y="-50%" width="200%" height="200%"><feGaussianBlur stdDeviation="2"/></filter>
<clipPath id="c908"><ellipse cx="864.5" cy="907.5" rx="25.5" ry="9"/></clipPath></defs>
<ellipse cx="868" cy="913" rx="29" ry="11.5" fill="#7a7a7a" opacity=".55" filter="url(#f908)"/>
<ellipse cx="866" cy="908" rx="29.2" ry="11.2" fill="#4a4a4a"/>
<ellipse cx="866" cy="908" rx="28.2" ry="10.3" fill="url(#g908)"/>
<rect x="875" y="896" width="22" height="24" fill="#0e6a14" clip-path="url(#c908)"/>
</svg>
<span style="left:63.20px;top:183.92px;font-size:12.8px;font-weight:normal;color:#2a8fc2;transform:scaleX(1.043);transform-origin:0 0;-webkit-text-stroke:0.35px #2a8fc2;">www.edibon.com</span>
<span style="left:61.74px;top:278.08px;font-size:17.7px;font-weight:bold;color:#ea1520;transform:scaleX(0.865);transform-origin:0 0;-webkit-text-stroke:0.35px #ea1520;">STOP</span>
<span style="left:175.55px;top:278.08px;font-size:17.7px;font-weight:bold;color:#6c9c7c;transform:scaleX(0.853);transform-origin:0 0;-webkit-text-stroke:0.35px #6c9c7c;">START</span>
<span style="left:67.40px;top:409.83px;font-size:20.3px;font-weight:bold;color:#080808;transform:scaleX(0.981);transform-origin:0 0;-webkit-text-stroke:0.22px #080808;">Type of Control</span>
<span style="left:78.41px;top:458.20px;font-size:16.8px;font-weight:bold;color:#1414e6;transform:scaleX(0.924);transform-origin:0 0;-webkit-text-stroke:0.22px #1414e6;">MOVE TO POINT</span>
<span style="left:125.58px;top:479.20px;font-size:16.8px;font-weight:bold;color:#1414e6;transform:scaleX(0.917);transform-origin:0 0;-webkit-text-stroke:0.22px #1414e6;">[F1]</span>
<span style="left:69.44px;top:519.50px;font-size:16.8px;font-weight:bold;color:#1414e6;transform:scaleX(0.910);transform-origin:0 0;-webkit-text-stroke:0.22px #1414e6;">SCANNING ROBOT</span>
<span style="left:125.06px;top:540.30px;font-size:16.8px;font-weight:bold;color:#1414e6;transform:scaleX(0.934);transform-origin:0 0;-webkit-text-stroke:0.22px #1414e6;">[F2]</span>
<span style="left:84.98px;top:580.60px;font-size:16.8px;font-weight:bold;color:#3a1cc8;transform:scaleX(0.867);transform-origin:0 0;-webkit-text-stroke:0.35px #3a1cc8;">PLOT RESULTS</span>
<span style="left:45.42px;top:642.00px;font-size:16.8px;font-weight:bold;color:#1414e6;transform:scaleX(0.922);transform-origin:0 0;-webkit-text-stroke:0.22px #1414e6;">ROBOT CONFIGURATION</span>
<span style="left:125.06px;top:663.50px;font-size:16.8px;font-weight:bold;color:#1414e6;transform:scaleX(0.934);transform-origin:0 0;-webkit-text-stroke:0.22px #1414e6;">[F4]</span>
<span style="left:62.76px;top:703.10px;font-size:16.8px;font-weight:bold;color:#1414e6;transform:scaleX(0.886);transform-origin:0 0;-webkit-text-stroke:0.35px #1414e6;">FORCED MOVEMENT</span>
<span style="left:125.06px;top:724.50px;font-size:16.8px;font-weight:bold;color:#1414e6;transform:scaleX(0.934);transform-origin:0 0;-webkit-text-stroke:0.22px #1414e6;">[F5]</span>
<span style="left:40.57px;top:914.78px;font-size:31.4px;font-weight:bold;color:#1a88c2;transform:scaleX(0.987);transform-origin:0 0;">S</span>
<span style="left:62.80px;top:914.78px;font-size:31.4px;font-weight:bold;color:#1a88c2;transform:scaleX(1.039);transform-origin:0 0;">C</span>
<span style="left:87.14px;top:914.78px;font-size:31.4px;font-weight:bold;color:#1a88c2;transform:scaleX(1.235);transform-origin:0 0;">A</span>
<span style="left:115.59px;top:914.78px;font-size:31.4px;font-weight:bold;color:#c4c4c4;transform:scaleX(1.049);transform-origin:0 0;">D</span>
<span style="left:134.79px;top:914.78px;font-size:31.4px;font-weight:bold;color:#c4c4c4;transform:scaleX(1.284);transform-origin:0 0;">A</span>
<span style="left:41.30px;top:966.08px;font-size:7.2px;font-weight:bold;color:#58a6cc;transform:scaleX(0.947);transform-origin:0 0;-webkit-text-stroke:0.22px #58a6cc;">Supervisory Control &amp;</span>
<span style="left:114.89px;top:966.08px;font-size:7.2px;font-weight:bold;color:#f07484;-webkit-text-stroke:0.22px #f07484;">Data Acquisition</span>
<span style="left:184.11px;top:905.81px;font-size:8.5px;font-weight:normal;color:#333;transform:scaleX(1.017);transform-origin:0 0;">Powered by:</span>
<span style="left:175.67px;top:953.76px;font-size:15.4px;font-weight:normal;color:#1a1a1a;">LabVIEW</span>
<span style="left:640.54px;top:152.33px;font-size:15px;font-weight:bold;color:#12ae2a;transform:scaleX(0.917);transform-origin:0 0;-webkit-text-stroke:0.22px #12ae2a;">LOAD FILE</span>
<span style="left:363.13px;top:215.80px;font-size:15.8px;font-weight:bold;color:#0c0c14;transform:scaleX(0.964);transform-origin:0 0;-webkit-text-stroke:0.22px #0c0c14;">Maximum Value</span>
<span style="left:570.83px;top:214.80px;font-size:15.8px;font-weight:bold;color:#0c0c14;transform:scaleX(0.972);transform-origin:0 0;-webkit-text-stroke:0.22px #0c0c14;">Minimum Value</span>
<span style="left:385.19px;top:241.19px;font-size:18.8px;font-weight:normal;color:#3a0808;transform:scaleX(0.806);transform-origin:0 0;">8,11157</span>
<span style="left:589.86px;top:238.39px;font-size:18.8px;font-weight:normal;color:#2a0830;transform:scaleX(0.788);transform-origin:0 0;">2,86251</span>
<span style="left:310.67px;top:292.31px;font-size:18px;font-weight:bold;color:#0a0a0a;transform:scaleX(0.975);transform-origin:0 0;-webkit-text-stroke:0.22px #0a0a0a;">Amplittude in sweeping plane</span>
<span style="left:816.19px;top:100.26px;font-size:17.5px;font-weight:bold;color:#0a0a0a;transform:scaleX(0.980);transform-origin:0 0;-webkit-text-stroke:0.22px #0a0a0a;">Sweeping plane parameters</span>
<span style="left:837.85px;top:163.29px;font-size:14.6px;font-weight:bold;color:#0a0a0a;-webkit-text-stroke:0.22px #0a0a0a;">X0</span>
<span style="left:870.69px;top:165.56px;font-size:16.4px;font-weight:normal;color:#0a0a0a;">10</span>
<span style="left:837.85px;top:196.59px;font-size:14.6px;font-weight:bold;color:#0a0a0a;-webkit-text-stroke:0.22px #0a0a0a;">X1</span>
<span style="left:870.69px;top:198.56px;font-size:16.4px;font-weight:normal;color:#0a0a0a;">10</span>
<span style="left:837.85px;top:228.79px;font-size:14.6px;font-weight:bold;color:#0a0a0a;-webkit-text-stroke:0.22px #0a0a0a;">X2</span>
<span style="left:870.69px;top:232.06px;font-size:16.4px;font-weight:normal;color:#0a0a0a;">110</span>
<span style="left:956.51px;top:167.39px;font-size:14.6px;font-weight:bold;color:#0a0a0a;-webkit-text-stroke:0.22px #0a0a0a;">Y0</span>
<span style="left:984.48px;top:167.16px;font-size:16.4px;font-weight:normal;color:#0a0a0a;">200</span>
<span style="left:956.51px;top:201.39px;font-size:14.6px;font-weight:bold;color:#0a0a0a;-webkit-text-stroke:0.22px #0a0a0a;">Y1</span>
<span style="left:984.64px;top:201.26px;font-size:16.4px;font-weight:normal;color:#0a0a0a;">320</span>
<span style="left:956.51px;top:234.59px;font-size:14.6px;font-weight:bold;color:#0a0a0a;-webkit-text-stroke:0.22px #0a0a0a;">Y2</span>
<span style="left:984.64px;top:235.46px;font-size:16.4px;font-weight:normal;color:#0a0a0a;">320</span>
<span style="left:1068.76px;top:167.29px;font-size:14.6px;font-weight:bold;color:#0a0a0a;-webkit-text-stroke:0.22px #0a0a0a;">Z0</span>
<span style="left:1097.49px;top:167.36px;font-size:16.4px;font-weight:normal;color:#0a0a0a;">165</span>
<span style="left:1068.76px;top:200.99px;font-size:14.6px;font-weight:bold;color:#0a0a0a;-webkit-text-stroke:0.22px #0a0a0a;">Z1</span>
<span style="left:1097.49px;top:200.66px;font-size:16.4px;font-weight:normal;color:#0a0a0a;">165</span>
<span style="left:1068.76px;top:234.19px;font-size:14.6px;font-weight:bold;color:#0a0a0a;-webkit-text-stroke:0.22px #0a0a0a;">Z2</span>
<span style="left:1097.49px;top:233.96px;font-size:16.4px;font-weight:normal;color:#0a0a0a;">165</span>
<span style="left:1187.36px;top:168.53px;font-size:15px;font-weight:bold;color:#0a0a0a;transform:scaleX(0.983);transform-origin:0 0;-webkit-text-stroke:0.22px #0a0a0a;">Steps (Nd1)</span>
<span style="left:1187.36px;top:220.93px;font-size:15px;font-weight:bold;color:#0a0a0a;transform:scaleX(0.983);transform-origin:0 0;-webkit-text-stroke:0.22px #0a0a0a;">Steps (Nd2)</span>
<span style="left:1280.49px;top:171.16px;font-size:16.4px;font-weight:normal;color:#0a0a0a;">10</span>
<span style="left:1280.49px;top:223.76px;font-size:16.4px;font-weight:normal;color:#0a0a0a;">10</span>
<span style="left:817.36px;top:300.16px;font-size:17.5px;font-weight:bold;color:#0a0a0a;transform:scaleX(1.009);transform-origin:0 0;-webkit-text-stroke:0.22px #0a0a0a;">Plotting sweeping plane &amp; body studied</span>
<span style="left:311.33px;top:749.84px;font-size:18.3px;font-weight:bold;color:#0a0a0a;transform:scaleX(0.943);transform-origin:0 0;-webkit-text-stroke:0.22px #0a0a0a;">TEMPORAL STUDY (point by point)</span>
<span style="left:300.28px;top:941.44px;font-size:15.2px;font-weight:bold;color:#0a0a0a;transform:scaleX(1.015);transform-origin:0 0;-webkit-text-stroke:0.22px #0a0a0a;">show proyections</span>
<span style="left:452.20px;top:941.74px;font-size:15.2px;font-weight:bold;color:#0a0a0a;transform:scaleX(1.034);transform-origin:0 0;-webkit-text-stroke:0.22px #0a0a0a;">proyection xy</span>
<span style="left:581.48px;top:940.44px;font-size:15.2px;font-weight:bold;color:#0a0a0a;transform:scaleX(1.016);transform-origin:0 0;-webkit-text-stroke:0.22px #0a0a0a;">cell xy</span>
<span style="left:651.87px;top:940.44px;font-size:15.2px;font-weight:bold;color:#0a0a0a;transform:scaleX(1.044);transform-origin:0 0;-webkit-text-stroke:0.22px #0a0a0a;">cell xz</span>
<span style="left:718.78px;top:940.44px;font-size:15.2px;font-weight:bold;color:#0a0a0a;transform:scaleX(1.015);transform-origin:0 0;-webkit-text-stroke:0.22px #0a0a0a;">cell yz</span>
<span style="left:310.17px;top:969.98px;font-size:16.6px;font-weight:normal;color:#0a0a0a;transform:scaleX(0.874);transform-origin:0 0;">OFF</span>
<span style="left:469.27px;top:968.88px;font-size:16.6px;font-weight:normal;color:#0a0a0a;transform:scaleX(0.877);transform-origin:0 0;">OFF</span>
<span style="left:590.59px;top:968.88px;font-size:16.6px;font-weight:normal;color:#0a0a0a;transform:scaleX(1.099);transform-origin:0 0;">ON</span>
<span style="left:661.09px;top:968.88px;font-size:16.6px;font-weight:normal;color:#0a0a0a;transform:scaleX(1.099);transform-origin:0 0;">ON</span>
<span style="left:734.59px;top:968.88px;font-size:16.6px;font-weight:normal;color:#0a0a0a;transform:scaleX(1.099);transform-origin:0 0;">ON</span>
<span style="left:830.62px;top:809.05px;font-size:16.3px;font-weight:bold;color:#0a0a0a;transform:scaleX(0.887);transform-origin:0 0;-webkit-text-stroke:0.35px #0a0a0a;">CLEAR GRAPH</span>
<span style="left:831.24px;top:875.65px;font-size:16.3px;font-weight:bold;color:#0a0a0a;transform:scaleX(0.857);transform-origin:0 0;-webkit-text-stroke:0.35px #0a0a0a;">CLEAR PLANES</span>
</body></html>
